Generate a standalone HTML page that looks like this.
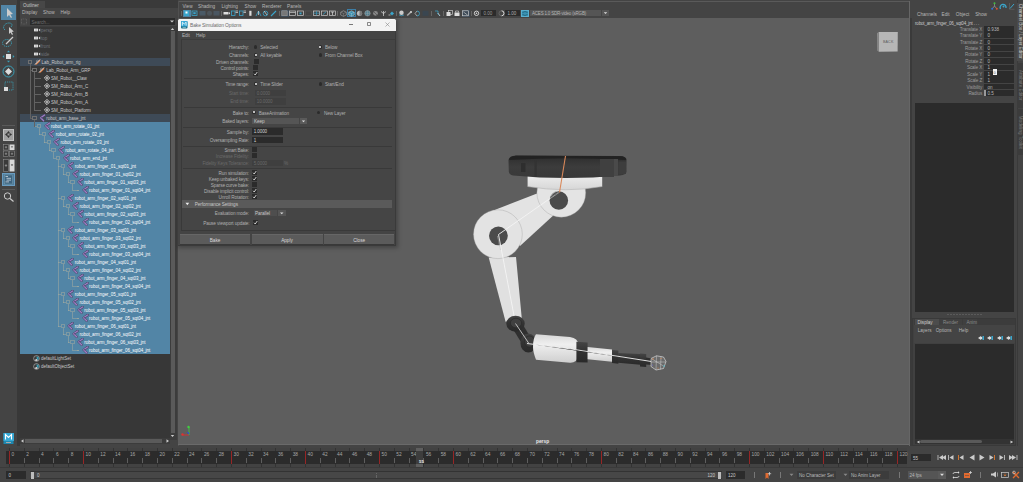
<!DOCTYPE html><html><head><meta charset="utf-8"><style>
html,body{margin:0;padding:0}
body{width:1023px;height:482px;overflow:hidden;position:relative;background:#444;font-family:"Liberation Sans",sans-serif}
div,span,svg{position:absolute;box-sizing:border-box}
.t{white-space:nowrap;line-height:1}
</style></head><body>
<div style="left:0px;top:0px;width:17px;height:446px;background:#444444;"></div>
<div style="left:17px;top:0px;width:2.5px;height:446px;background:#383838;"></div>
<div style="left:1px;top:5px;width:15px;height:15px;background:#5285a6;"></div>
<svg style="left:1px;top:5px;" width="15" height="15" viewBox="0 0 15 15"><path d="M6 3 L6 12 L8 10 L10 13 L11 12.3 L9.3 9.4 L12 9 Z" fill="#ccc"/></svg>
<svg style="left:1px;top:20px;" width="15" height="15" viewBox="0 0 15 15"><path d="M4 10 C1 8 3 3 8 3 C11 3 12 5 10 7" fill="none" stroke="#38a0b8" stroke-width="1" stroke-dasharray="1.2 0.8"/><path d="M8 7 L8 14 L9.5 12.5 L11 15 L12 14.3 L10.7 12 L12.8 11.6Z" fill="#ccc"/></svg>
<svg style="left:1px;top:34px;" width="15" height="15" viewBox="0 0 15 15"><ellipse cx="6" cy="9" rx="4.5" ry="3.5" fill="none" stroke="#38a0b8" stroke-width="1" stroke-dasharray="1.2 0.8"/><path d="M5 10 L12 3" stroke="#ccc" stroke-width="1.3"/></svg>
<svg style="left:1px;top:49px;" width="15" height="15" viewBox="0 0 15 15"><rect x="5" y="5" width="5" height="5" fill="#ddd"/><path d="M7.5 1.5 L6 3.2 H9Z M7.5 13.5 L6 11.8 H9Z M1.5 7.5 L3.2 6 V9Z M13.5 7.5 L11.8 6 V9Z" fill="#38a0b8"/></svg>
<svg style="left:1px;top:64px;" width="15" height="15" viewBox="0 0 15 15"><circle cx="7.5" cy="7.5" r="5.5" fill="none" stroke="#38a0b8" stroke-width="1"/><path d="M7.5 4 L11 7.5 L7.5 11 L4 7.5Z" fill="#ddd"/></svg>
<svg style="left:1px;top:79px;" width="15" height="15" viewBox="0 0 15 15"><rect x="4" y="3" width="8" height="8" fill="none" stroke="#38a0b8" stroke-width="0.9" stroke-dasharray="1 0.9"/><rect x="3" y="8" width="4" height="4" fill="#ddd"/></svg>
<div style="left:2px;top:124.5px;width:13px;height:1px;background:#5a5a5a;"></div>
<div style="left:2.5px;top:128.8px;width:11.5px;height:12px;background:#a0a0a0;border:0.6px solid #c0c0c0"></div>
<svg style="left:2.7px;top:129.3px;" width="11" height="11" viewBox="0 0 11 11"><path d="M5.5 2 L7.5 4.5 H3.5Z M5.5 9 L3.5 6.5 H7.5Z M2 5.5 L4.5 3.5 V7.5Z M9 5.5 L6.5 3.5 V7.5Z" fill="#333"/></svg>
<svg style="left:2.5px;top:144px;" width="12" height="13" viewBox="0 0 12 13"><rect x="0.5" y="0.5" width="5" height="5.5" fill="#3a3a3a" stroke="#999" stroke-width="0.5"/><rect x="6.5" y="0.5" width="5" height="5.5" fill="#d8d8d8"/><path d="M7.8 2.5 H10.2 L9 3.8Z" fill="#333"/><rect x="0.5" y="7" width="5" height="5.5" fill="#3a3a3a" stroke="#999" stroke-width="0.5"/><rect x="6.5" y="7" width="5" height="5.5" fill="#3a3a3a" stroke="#999" stroke-width="0.5"/><path d="M3 2 V4.5 M1.8 3.2 H4.2 M3 8.5 V11 M1.8 9.8 H4.2 M9 8.5 V11 M7.8 9.8 H10.2" stroke="#bbb" stroke-width="0.5"/></svg>
<svg style="left:2.5px;top:158.5px;" width="12" height="13" viewBox="0 0 12 13"><rect x="0.5" y="0.5" width="5" height="12" fill="#3a3a3a" stroke="#999" stroke-width="0.5"/><rect x="6.5" y="0.5" width="5" height="12" fill="#d8d8d8"/><path d="M7.8 5.5 H10.2 L9 7Z" fill="#333"/><path d="M3 5 V8 M1.8 6.5 H4.2" stroke="#bbb" stroke-width="0.5"/></svg>
<div style="left:2px;top:172.5px;width:13px;height:13px;background:#4f7d9c;border:0.6px solid #6a9cc0"></div>
<svg style="left:2px;top:172.5px;" width="13" height="13" viewBox="0 0 13 13"><rect x="2.5" y="2" width="8" height="9" fill="#3d6480" stroke="#8ab" stroke-width="0.4"/><path d="M3.5 3.5 H6 M4.5 5.3 H9 M4.5 7.1 H9 M3.5 8.9 H7" stroke="#e0e8ee" stroke-width="0.7"/></svg>
<div style="left:2px;top:188.5px;width:13px;height:1px;background:#5a5a5a;"></div>
<svg style="left:2px;top:191px;" width="13" height="11" viewBox="0 0 13 11"><circle cx="5.5" cy="5" r="3.2" fill="none" stroke="#ccc" stroke-width="1"/><path d="M8 7.5 L11.5 10.5" stroke="#ccc" stroke-width="1.2"/></svg>
<svg style="left:2px;top:432px;" width="13" height="13" viewBox="0 0 13 13"><path d="M1.5 1 H11.5 V12 H1.5Z" fill="#1e88b0"/><path d="M1.5 1 H12 V9 H1.5Z" fill="#37a8d4"/><path d="M3.5 7.5 V2.5 L6.5 5.5 L9.5 2.5 V7.5" fill="none" stroke="#fff" stroke-width="1.1"/><rect x="4" y="10" width="5" height="1" fill="#aaa"/></svg>
<div style="left:19.5px;top:0px;width:158.5px;height:446px;background:#444444;"></div>
<div style="left:19.5px;top:0px;width:158px;height:1px;background:#3a3a3a;"></div>
<div style="left:19.5px;top:1px;width:25px;height:6.8px;background:#474747;"></div>
<span class="t" style="left:23px;top:4.07px;font-size:4.5px;color:#c8c8c8;">Outliner</span>
<div style="left:44.5px;top:0px;width:133px;height:7.8px;background:#3a3a3a;"></div>
<span class="t" style="left:22px;top:11.07px;font-size:4.7px;color:#b8b8b8;">Display</span>
<span class="t" style="left:43px;top:11.07px;font-size:4.7px;color:#b8b8b8;">Show</span>
<span class="t" style="left:60.5px;top:11.07px;font-size:4.7px;color:#b8b8b8;">Help</span>
<svg style="left:20px;top:18px;" width="8" height="7" viewBox="0 0 8 7"><rect x="1.5" y="1" width="5" height="5" fill="none" stroke="#777" stroke-width="0.5" stroke-dasharray="1 0.6"/></svg>
<div style="left:30px;top:18px;width:144.5px;height:7px;background:#2b2b2b;"></div>
<span class="t" style="left:31.5px;top:20.87px;font-size:4.5px;color:#707070;">Search...</span>
<svg style="left:168.5px;top:19px;" width="6" height="5" viewBox="0 0 6 5"><path d="M1 1.5 H5 L3 3.5Z" fill="#ccc"/></svg>
<div style="left:19.5px;top:25.5px;width:150.7px;height:414px;background:#373737;"></div>
<div style="left:19.5px;top:25.5px;width:152px;height:0.8px;background:#3e3e3e;"></div>
<div style="left:170.2px;top:25.5px;width:6.8px;height:414px;background:#3c3c3c;"></div>
<svg style="left:170.3px;top:27px;" width="5" height="4" viewBox="0 0 5 4"><path d="M0.8 3 L2.5 1 L4.2 3Z" fill="#ccc"/></svg>
<div style="left:170.6px;top:31px;width:4.4px;height:401.5px;background:#5a5a5a;"></div>
<svg style="left:170.3px;top:434px;" width="5" height="4" viewBox="0 0 5 4"><path d="M0.8 1 L2.5 3 L4.2 1Z" fill="#ccc"/></svg>
<div style="left:19.5px;top:438px;width:150.7px;height:6px;background:#3c3c3c;"></div>
<svg style="left:20px;top:438px;" width="5" height="6" viewBox="0 0 5 6"><path d="M1 3 L3.5 1.3 V4.7Z" fill="#ccc"/></svg>
<div style="left:25px;top:439px;width:136.5px;height:4px;background:#5a5a5a;"></div>
<svg style="left:165px;top:438px;" width="5" height="6" viewBox="0 0 5 6"><path d="M4 3 L1.5 1.3 V4.7Z" fill="#ccc"/></svg>
<div style="left:19.5px;top:122.2px;width:150.7px;height:232px;background:#5285a6;"></div>
<div style="left:19.5px;top:58.2px;width:150.7px;height:8px;background:#3e4a57;"></div>
<div style="left:19.5px;top:114.2px;width:150.7px;height:8px;background:#3e4a57;"></div>
<div style="left:29.55px;top:64.0px;width:0.5px;height:54.5px;background:#626262;"></div>
<div style="left:29.8px;top:69.95px;width:2.5500000000000007px;height:0.5px;background:#626262;"></div>
<div style="left:29.8px;top:117.95px;width:2.5500000000000007px;height:0.5px;background:#626262;"></div>
<div style="left:34.300000000000004px;top:72.0px;width:0.5px;height:38.5px;background:#626262;"></div>
<div style="left:34.550000000000004px;top:77.95px;width:6.049999999999997px;height:0.5px;background:#626262;"></div>
<div style="left:39.4px;top:77.5px;width:1.4px;height:1.4px;background:#626262;"></div>
<div style="left:34.550000000000004px;top:85.95px;width:6.049999999999997px;height:0.5px;background:#626262;"></div>
<div style="left:39.4px;top:85.5px;width:1.4px;height:1.4px;background:#626262;"></div>
<div style="left:34.550000000000004px;top:93.95px;width:6.049999999999997px;height:0.5px;background:#626262;"></div>
<div style="left:39.4px;top:93.5px;width:1.4px;height:1.4px;background:#626262;"></div>
<div style="left:34.550000000000004px;top:101.95px;width:6.049999999999997px;height:0.5px;background:#626262;"></div>
<div style="left:39.4px;top:101.5px;width:1.4px;height:1.4px;background:#626262;"></div>
<div style="left:34.550000000000004px;top:109.95px;width:6.049999999999997px;height:0.5px;background:#626262;"></div>
<div style="left:39.4px;top:109.5px;width:1.4px;height:1.4px;background:#626262;"></div>
<div style="left:34.300000000000004px;top:120.0px;width:0.5px;height:6.500000000000003px;background:#626262;"></div>
<div style="left:34.550000000000004px;top:125.95px;width:2.549999999999997px;height:0.5px;background:rgba(185,180,160,0.42);"></div>
<div style="left:39.050000000000004px;top:128.0px;width:0.5px;height:6.4999999999999885px;background:rgba(185,180,160,0.42);"></div>
<div style="left:39.300000000000004px;top:133.95px;width:2.549999999999997px;height:0.5px;background:rgba(185,180,160,0.42);"></div>
<div style="left:43.800000000000004px;top:136.0px;width:0.5px;height:6.4999999999999885px;background:rgba(185,180,160,0.42);"></div>
<div style="left:44.050000000000004px;top:141.95px;width:2.549999999999997px;height:0.5px;background:rgba(185,180,160,0.42);"></div>
<div style="left:48.550000000000004px;top:144.0px;width:0.5px;height:6.4999999999999885px;background:rgba(185,180,160,0.42);"></div>
<div style="left:48.800000000000004px;top:149.95px;width:2.549999999999997px;height:0.5px;background:rgba(185,180,160,0.42);"></div>
<div style="left:53.300000000000004px;top:152.0px;width:0.5px;height:6.4999999999999885px;background:rgba(185,180,160,0.42);"></div>
<div style="left:53.550000000000004px;top:157.95px;width:2.549999999999997px;height:0.5px;background:rgba(185,180,160,0.42);"></div>
<div style="left:58.050000000000004px;top:160.0px;width:0.5px;height:166.5px;background:rgba(185,180,160,0.42);"></div>
<div style="left:58.300000000000004px;top:165.95px;width:2.549999999999997px;height:0.5px;background:rgba(185,180,160,0.42);"></div>
<div style="left:58.300000000000004px;top:197.95px;width:2.549999999999997px;height:0.5px;background:rgba(185,180,160,0.42);"></div>
<div style="left:58.300000000000004px;top:229.95px;width:2.549999999999997px;height:0.5px;background:rgba(185,180,160,0.42);"></div>
<div style="left:58.300000000000004px;top:261.95px;width:2.549999999999997px;height:0.5px;background:rgba(185,180,160,0.42);"></div>
<div style="left:58.300000000000004px;top:293.95px;width:2.549999999999997px;height:0.5px;background:rgba(185,180,160,0.42);"></div>
<div style="left:58.300000000000004px;top:325.95px;width:2.549999999999997px;height:0.5px;background:rgba(185,180,160,0.42);"></div>
<div style="left:62.800000000000004px;top:168.0px;width:0.5px;height:6.4999999999999885px;background:rgba(185,180,160,0.42);"></div>
<div style="left:63.050000000000004px;top:173.95px;width:2.54999999999999px;height:0.5px;background:rgba(185,180,160,0.42);"></div>
<div style="left:67.55px;top:176.0px;width:0.5px;height:6.4999999999999885px;background:rgba(185,180,160,0.42);"></div>
<div style="left:67.8px;top:181.95px;width:2.549999999999997px;height:0.5px;background:rgba(185,180,160,0.42);"></div>
<div style="left:72.3px;top:184.0px;width:0.5px;height:6.4999999999999885px;background:rgba(185,180,160,0.42);"></div>
<div style="left:72.55px;top:189.95px;width:6.049999999999997px;height:0.5px;background:rgba(185,180,160,0.42);"></div>
<div style="left:77.39999999999999px;top:189.5px;width:1.4px;height:1.4px;background:rgba(185,180,160,0.42);"></div>
<div style="left:62.800000000000004px;top:200.0px;width:0.5px;height:6.4999999999999885px;background:rgba(185,180,160,0.42);"></div>
<div style="left:63.050000000000004px;top:205.95px;width:2.54999999999999px;height:0.5px;background:rgba(185,180,160,0.42);"></div>
<div style="left:67.55px;top:208.0px;width:0.5px;height:6.4999999999999885px;background:rgba(185,180,160,0.42);"></div>
<div style="left:67.8px;top:213.95px;width:2.549999999999997px;height:0.5px;background:rgba(185,180,160,0.42);"></div>
<div style="left:72.3px;top:216.0px;width:0.5px;height:6.4999999999999885px;background:rgba(185,180,160,0.42);"></div>
<div style="left:72.55px;top:221.95px;width:6.049999999999997px;height:0.5px;background:rgba(185,180,160,0.42);"></div>
<div style="left:77.39999999999999px;top:221.5px;width:1.4px;height:1.4px;background:rgba(185,180,160,0.42);"></div>
<div style="left:62.800000000000004px;top:232.0px;width:0.5px;height:6.4999999999999885px;background:rgba(185,180,160,0.42);"></div>
<div style="left:63.050000000000004px;top:237.95px;width:2.54999999999999px;height:0.5px;background:rgba(185,180,160,0.42);"></div>
<div style="left:67.55px;top:240.0px;width:0.5px;height:6.4999999999999885px;background:rgba(185,180,160,0.42);"></div>
<div style="left:67.8px;top:245.95px;width:2.549999999999997px;height:0.5px;background:rgba(185,180,160,0.42);"></div>
<div style="left:72.3px;top:248.0px;width:0.5px;height:6.4999999999999885px;background:rgba(185,180,160,0.42);"></div>
<div style="left:72.55px;top:253.95px;width:6.049999999999997px;height:0.5px;background:rgba(185,180,160,0.42);"></div>
<div style="left:77.39999999999999px;top:253.5px;width:1.4px;height:1.4px;background:rgba(185,180,160,0.42);"></div>
<div style="left:62.800000000000004px;top:264.0px;width:0.5px;height:6.4999999999999885px;background:rgba(185,180,160,0.42);"></div>
<div style="left:63.050000000000004px;top:269.95px;width:2.54999999999999px;height:0.5px;background:rgba(185,180,160,0.42);"></div>
<div style="left:67.55px;top:272.0px;width:0.5px;height:6.4999999999999885px;background:rgba(185,180,160,0.42);"></div>
<div style="left:67.8px;top:277.95px;width:2.549999999999997px;height:0.5px;background:rgba(185,180,160,0.42);"></div>
<div style="left:72.3px;top:280.0px;width:0.5px;height:6.4999999999999885px;background:rgba(185,180,160,0.42);"></div>
<div style="left:72.55px;top:285.95px;width:6.049999999999997px;height:0.5px;background:rgba(185,180,160,0.42);"></div>
<div style="left:77.39999999999999px;top:285.5px;width:1.4px;height:1.4px;background:rgba(185,180,160,0.42);"></div>
<div style="left:62.800000000000004px;top:296.0px;width:0.5px;height:6.4999999999999885px;background:rgba(185,180,160,0.42);"></div>
<div style="left:63.050000000000004px;top:301.95px;width:2.54999999999999px;height:0.5px;background:rgba(185,180,160,0.42);"></div>
<div style="left:67.55px;top:304.0px;width:0.5px;height:6.4999999999999885px;background:rgba(185,180,160,0.42);"></div>
<div style="left:67.8px;top:309.95px;width:2.549999999999997px;height:0.5px;background:rgba(185,180,160,0.42);"></div>
<div style="left:72.3px;top:312.0px;width:0.5px;height:6.4999999999999885px;background:rgba(185,180,160,0.42);"></div>
<div style="left:72.55px;top:317.95px;width:6.049999999999997px;height:0.5px;background:rgba(185,180,160,0.42);"></div>
<div style="left:77.39999999999999px;top:317.5px;width:1.4px;height:1.4px;background:rgba(185,180,160,0.42);"></div>
<div style="left:62.800000000000004px;top:328.0px;width:0.5px;height:6.4999999999999885px;background:rgba(185,180,160,0.42);"></div>
<div style="left:63.050000000000004px;top:333.95px;width:2.54999999999999px;height:0.5px;background:rgba(185,180,160,0.42);"></div>
<div style="left:67.55px;top:336.0px;width:0.5px;height:6.4999999999999885px;background:rgba(185,180,160,0.42);"></div>
<div style="left:67.8px;top:341.95px;width:2.549999999999997px;height:0.5px;background:rgba(185,180,160,0.42);"></div>
<div style="left:72.3px;top:344.0px;width:0.5px;height:6.4999999999999885px;background:rgba(185,180,160,0.42);"></div>
<div style="left:72.55px;top:349.95px;width:6.049999999999997px;height:0.5px;background:rgba(185,180,160,0.42);"></div>
<div style="left:77.39999999999999px;top:349.5px;width:1.4px;height:1.4px;background:rgba(185,180,160,0.42);"></div>
<svg style="left:34px;top:28.2px;" width="7" height="4" viewBox="0 0 7 4"><rect x="0" y="0.6" width="4" height="2.8" fill="#e0e0e0"/><path d="M4.5 2 L6.2 0.6 V3.4Z" fill="#e0e0e0"/><rect x="1.8" y="0.6" width="0.5" height="2.8" fill="#888"/></svg>
<span class="t" style="left:41px;top:29.27px;font-size:4.5px;color:#6e7278;">persp</span>
<svg style="left:34px;top:36.2px;" width="7" height="4" viewBox="0 0 7 4"><rect x="0" y="0.6" width="4" height="2.8" fill="#e0e0e0"/><path d="M4.5 2 L6.2 0.6 V3.4Z" fill="#e0e0e0"/><rect x="1.8" y="0.6" width="0.5" height="2.8" fill="#888"/></svg>
<span class="t" style="left:41px;top:37.27px;font-size:4.5px;color:#6e7278;">top</span>
<svg style="left:34px;top:44.2px;" width="7" height="4" viewBox="0 0 7 4"><rect x="0" y="0.6" width="4" height="2.8" fill="#e0e0e0"/><path d="M4.5 2 L6.2 0.6 V3.4Z" fill="#e0e0e0"/><rect x="1.8" y="0.6" width="0.5" height="2.8" fill="#888"/></svg>
<span class="t" style="left:41px;top:45.27px;font-size:4.5px;color:#6e7278;">front</span>
<svg style="left:34px;top:52.2px;" width="7" height="4" viewBox="0 0 7 4"><rect x="0" y="0.6" width="4" height="2.8" fill="#e0e0e0"/><path d="M4.5 2 L6.2 0.6 V3.4Z" fill="#e0e0e0"/><rect x="1.8" y="0.6" width="0.5" height="2.8" fill="#888"/></svg>
<span class="t" style="left:41px;top:53.27px;font-size:4.5px;color:#6e7278;">side</span>
<svg style="left:33.7px;top:59.2px;" width="7" height="6" viewBox="0 0 7 6"><path d="M1 5.5 L5.8 0.8 L6.5 2 L2.5 5.8Z" fill="#d9743a"/><path d="M1 5.5 L6 0.5" stroke="#f0f0f0" stroke-width="0.9"/><path d="M2 2.5 L3.5 1.2" stroke="#ddd" stroke-width="0.6"/></svg>
<span class="t" style="left:41.6px;top:61.27px;font-size:4.5px;color:#c8c8c8;letter-spacing:-0.05px">Lab_Robot_arm_rig</span>
<div style="left:27.6px;top:60.400000000000006px;width:4.4px;height:3.6px;border:0.6px solid #707070"></div>
<svg style="left:38.45px;top:67.2px;" width="7" height="6" viewBox="0 0 7 6"><path d="M1 5.5 L5.8 0.8 L6.5 2 L2.5 5.8Z" fill="#d9743a"/><path d="M1 5.5 L6 0.5" stroke="#f0f0f0" stroke-width="0.9"/><path d="M2 2.5 L3.5 1.2" stroke="#ddd" stroke-width="0.6"/></svg>
<span class="t" style="left:46.35px;top:69.27px;font-size:4.5px;color:#c8c8c8;letter-spacing:-0.05px">Lab_Robot_Arm_GRP</span>
<div style="left:32.35px;top:68.4px;width:4.4px;height:3.6px;border:0.6px solid #707070"></div>
<svg style="left:43.7px;top:75.2px;" width="6" height="6" viewBox="0 0 6 6"><path d="M3 0.4 L5.6 3 L3 5.6 L0.4 3Z" fill="none" stroke="#e0e0e0" stroke-width="0.9"/><circle cx="3" cy="3" r="0.9" fill="#e0e0e0"/></svg>
<span class="t" style="left:51.1px;top:77.27px;font-size:4.5px;color:#c8c8c8;letter-spacing:-0.05px">SM_Robot__Claw</span>
<svg style="left:43.7px;top:83.2px;" width="6" height="6" viewBox="0 0 6 6"><path d="M3 0.4 L5.6 3 L3 5.6 L0.4 3Z" fill="none" stroke="#e0e0e0" stroke-width="0.9"/><circle cx="3" cy="3" r="0.9" fill="#e0e0e0"/></svg>
<span class="t" style="left:51.1px;top:85.27px;font-size:4.5px;color:#c8c8c8;letter-spacing:-0.05px">SM_Robot_Arm_C</span>
<svg style="left:43.7px;top:91.2px;" width="6" height="6" viewBox="0 0 6 6"><path d="M3 0.4 L5.6 3 L3 5.6 L0.4 3Z" fill="none" stroke="#e0e0e0" stroke-width="0.9"/><circle cx="3" cy="3" r="0.9" fill="#e0e0e0"/></svg>
<span class="t" style="left:51.1px;top:93.27px;font-size:4.5px;color:#c8c8c8;letter-spacing:-0.05px">SM_Robot_Arm_B</span>
<svg style="left:43.7px;top:99.2px;" width="6" height="6" viewBox="0 0 6 6"><path d="M3 0.4 L5.6 3 L3 5.6 L0.4 3Z" fill="none" stroke="#e0e0e0" stroke-width="0.9"/><circle cx="3" cy="3" r="0.9" fill="#e0e0e0"/></svg>
<span class="t" style="left:51.1px;top:101.27px;font-size:4.5px;color:#c8c8c8;letter-spacing:-0.05px">SM_Robot_Arm_A</span>
<svg style="left:43.7px;top:107.2px;" width="6" height="6" viewBox="0 0 6 6"><path d="M3 0.4 L5.6 3 L3 5.6 L0.4 3Z" fill="none" stroke="#e0e0e0" stroke-width="0.9"/><circle cx="3" cy="3" r="0.9" fill="#e0e0e0"/></svg>
<span class="t" style="left:51.1px;top:109.27px;font-size:4.5px;color:#c8c8c8;letter-spacing:-0.05px">SM_Robot_Platform</span>
<svg style="left:38.75px;top:114.4px;" width="7" height="7.6" viewBox="0 0 7 7.6"><path d="M5.6 1 L1.6 3.8 L4.6 6.8" fill="none" stroke="#4a3f5e" stroke-width="2.2" stroke-linecap="round" stroke-linejoin="round"/><path d="M5.6 1 L1.6 3.8 L4.6 6.8" fill="none" stroke="#9d80c8" stroke-width="1.3" stroke-linecap="round" stroke-linejoin="round"/><circle cx="2.3" cy="3.8" r="0.55" fill="#3a3050"/></svg>
<span class="t" style="left:46.35px;top:117.27px;font-size:4.5px;color:#c8c8c8;letter-spacing:-0.05px">robot_arm_base_jnt</span>
<div style="left:32.35px;top:116.4px;width:4.4px;height:3.6px;border:0.6px solid #707070"></div>
<svg style="left:43.5px;top:122.4px;" width="7" height="7.6" viewBox="0 0 7 7.6"><path d="M5.6 1 L1.6 3.8 L4.6 6.8" fill="none" stroke="#4a3f5e" stroke-width="2.2" stroke-linecap="round" stroke-linejoin="round"/><path d="M5.6 1 L1.6 3.8 L4.6 6.8" fill="none" stroke="#9d80c8" stroke-width="1.3" stroke-linecap="round" stroke-linejoin="round"/><circle cx="2.3" cy="3.8" r="0.55" fill="#3a3050"/></svg>
<span class="t" style="left:51.1px;top:125.27px;font-size:4.5px;color:#ffffff;letter-spacing:-0.05px">robot_arm_rotate_01_jnt</span>
<div style="left:37.1px;top:124.4px;width:4.4px;height:3.6px;border:0.6px solid rgba(185,180,160,0.42)"></div>
<svg style="left:48.25px;top:130.39999999999998px;" width="7" height="7.6" viewBox="0 0 7 7.6"><path d="M5.6 1 L1.6 3.8 L4.6 6.8" fill="none" stroke="#4a3f5e" stroke-width="2.2" stroke-linecap="round" stroke-linejoin="round"/><path d="M5.6 1 L1.6 3.8 L4.6 6.8" fill="none" stroke="#9d80c8" stroke-width="1.3" stroke-linecap="round" stroke-linejoin="round"/><circle cx="2.3" cy="3.8" r="0.55" fill="#3a3050"/></svg>
<span class="t" style="left:55.85px;top:133.27px;font-size:4.5px;color:#ffffff;letter-spacing:-0.05px">robot_arm_rotate_02_jnt</span>
<div style="left:41.85px;top:132.39999999999998px;width:4.4px;height:3.6px;border:0.6px solid rgba(185,180,160,0.42)"></div>
<svg style="left:53.0px;top:138.39999999999998px;" width="7" height="7.6" viewBox="0 0 7 7.6"><path d="M5.6 1 L1.6 3.8 L4.6 6.8" fill="none" stroke="#4a3f5e" stroke-width="2.2" stroke-linecap="round" stroke-linejoin="round"/><path d="M5.6 1 L1.6 3.8 L4.6 6.8" fill="none" stroke="#9d80c8" stroke-width="1.3" stroke-linecap="round" stroke-linejoin="round"/><circle cx="2.3" cy="3.8" r="0.55" fill="#3a3050"/></svg>
<span class="t" style="left:60.6px;top:141.27px;font-size:4.5px;color:#ffffff;letter-spacing:-0.05px">robot_arm_rotate_03_jnt</span>
<div style="left:46.6px;top:140.39999999999998px;width:4.4px;height:3.6px;border:0.6px solid rgba(185,180,160,0.42)"></div>
<svg style="left:57.75px;top:146.39999999999998px;" width="7" height="7.6" viewBox="0 0 7 7.6"><path d="M5.6 1 L1.6 3.8 L4.6 6.8" fill="none" stroke="#4a3f5e" stroke-width="2.2" stroke-linecap="round" stroke-linejoin="round"/><path d="M5.6 1 L1.6 3.8 L4.6 6.8" fill="none" stroke="#9d80c8" stroke-width="1.3" stroke-linecap="round" stroke-linejoin="round"/><circle cx="2.3" cy="3.8" r="0.55" fill="#3a3050"/></svg>
<span class="t" style="left:65.35000000000001px;top:149.27px;font-size:4.5px;color:#ffffff;letter-spacing:-0.05px">robot_arm_rotate_04_jnt</span>
<div style="left:51.35px;top:148.39999999999998px;width:4.4px;height:3.6px;border:0.6px solid rgba(185,180,160,0.42)"></div>
<svg style="left:62.5px;top:154.39999999999998px;" width="7" height="7.6" viewBox="0 0 7 7.6"><path d="M5.6 1 L1.6 3.8 L4.6 6.8" fill="none" stroke="#4a3f5e" stroke-width="2.2" stroke-linecap="round" stroke-linejoin="round"/><path d="M5.6 1 L1.6 3.8 L4.6 6.8" fill="none" stroke="#9d80c8" stroke-width="1.3" stroke-linecap="round" stroke-linejoin="round"/><circle cx="2.3" cy="3.8" r="0.55" fill="#3a3050"/></svg>
<span class="t" style="left:70.10000000000001px;top:157.27px;font-size:4.5px;color:#ffffff;letter-spacing:-0.05px">robot_arm_end_jnt</span>
<div style="left:56.1px;top:156.39999999999998px;width:4.4px;height:3.6px;border:0.6px solid rgba(185,180,160,0.42)"></div>
<svg style="left:67.25px;top:162.39999999999998px;" width="7" height="7.6" viewBox="0 0 7 7.6"><path d="M5.6 1 L1.6 3.8 L4.6 6.8" fill="none" stroke="#4a3f5e" stroke-width="2.2" stroke-linecap="round" stroke-linejoin="round"/><path d="M5.6 1 L1.6 3.8 L4.6 6.8" fill="none" stroke="#9d80c8" stroke-width="1.3" stroke-linecap="round" stroke-linejoin="round"/><circle cx="2.3" cy="3.8" r="0.55" fill="#3a3050"/></svg>
<span class="t" style="left:74.85000000000001px;top:165.27px;font-size:4.5px;color:#ffffff;letter-spacing:-0.05px">robot_arm_finger_01_sqt01_jnt</span>
<div style="left:60.85px;top:164.39999999999998px;width:4.4px;height:3.6px;border:0.6px solid rgba(185,180,160,0.42)"></div>
<svg style="left:72.0px;top:170.39999999999998px;" width="7" height="7.6" viewBox="0 0 7 7.6"><path d="M5.6 1 L1.6 3.8 L4.6 6.8" fill="none" stroke="#4a3f5e" stroke-width="2.2" stroke-linecap="round" stroke-linejoin="round"/><path d="M5.6 1 L1.6 3.8 L4.6 6.8" fill="none" stroke="#9d80c8" stroke-width="1.3" stroke-linecap="round" stroke-linejoin="round"/><circle cx="2.3" cy="3.8" r="0.55" fill="#3a3050"/></svg>
<span class="t" style="left:79.60000000000001px;top:173.27px;font-size:4.5px;color:#ffffff;letter-spacing:-0.05px">robot_arm_finger_01_sqt02_jnt</span>
<div style="left:65.6px;top:172.39999999999998px;width:4.4px;height:3.6px;border:0.6px solid rgba(185,180,160,0.42)"></div>
<svg style="left:76.75px;top:178.39999999999998px;" width="7" height="7.6" viewBox="0 0 7 7.6"><path d="M5.6 1 L1.6 3.8 L4.6 6.8" fill="none" stroke="#4a3f5e" stroke-width="2.2" stroke-linecap="round" stroke-linejoin="round"/><path d="M5.6 1 L1.6 3.8 L4.6 6.8" fill="none" stroke="#9d80c8" stroke-width="1.3" stroke-linecap="round" stroke-linejoin="round"/><circle cx="2.3" cy="3.8" r="0.55" fill="#3a3050"/></svg>
<span class="t" style="left:84.35000000000001px;top:181.27px;font-size:4.5px;color:#ffffff;letter-spacing:-0.05px">robot_arm_finger_01_sqt03_jnt</span>
<div style="left:70.35px;top:180.39999999999998px;width:4.4px;height:3.6px;border:0.6px solid rgba(185,180,160,0.42)"></div>
<svg style="left:81.5px;top:186.39999999999998px;" width="7" height="7.6" viewBox="0 0 7 7.6"><path d="M5.6 1 L1.6 3.8 L4.6 6.8" fill="none" stroke="#4a3f5e" stroke-width="2.2" stroke-linecap="round" stroke-linejoin="round"/><path d="M5.6 1 L1.6 3.8 L4.6 6.8" fill="none" stroke="#9d80c8" stroke-width="1.3" stroke-linecap="round" stroke-linejoin="round"/><circle cx="2.3" cy="3.8" r="0.55" fill="#3a3050"/></svg>
<span class="t" style="left:89.10000000000001px;top:189.27px;font-size:4.5px;color:#ffffff;letter-spacing:-0.05px">robot_arm_finger_01_sqt04_jnt</span>
<svg style="left:67.25px;top:194.39999999999998px;" width="7" height="7.6" viewBox="0 0 7 7.6"><path d="M5.6 1 L1.6 3.8 L4.6 6.8" fill="none" stroke="#4a3f5e" stroke-width="2.2" stroke-linecap="round" stroke-linejoin="round"/><path d="M5.6 1 L1.6 3.8 L4.6 6.8" fill="none" stroke="#9d80c8" stroke-width="1.3" stroke-linecap="round" stroke-linejoin="round"/><circle cx="2.3" cy="3.8" r="0.55" fill="#3a3050"/></svg>
<span class="t" style="left:74.85000000000001px;top:197.27px;font-size:4.5px;color:#ffffff;letter-spacing:-0.05px">robot_arm_finger_02_sqt01_jnt</span>
<div style="left:60.85px;top:196.39999999999998px;width:4.4px;height:3.6px;border:0.6px solid rgba(185,180,160,0.42)"></div>
<svg style="left:72.0px;top:202.39999999999998px;" width="7" height="7.6" viewBox="0 0 7 7.6"><path d="M5.6 1 L1.6 3.8 L4.6 6.8" fill="none" stroke="#4a3f5e" stroke-width="2.2" stroke-linecap="round" stroke-linejoin="round"/><path d="M5.6 1 L1.6 3.8 L4.6 6.8" fill="none" stroke="#9d80c8" stroke-width="1.3" stroke-linecap="round" stroke-linejoin="round"/><circle cx="2.3" cy="3.8" r="0.55" fill="#3a3050"/></svg>
<span class="t" style="left:79.60000000000001px;top:205.27px;font-size:4.5px;color:#ffffff;letter-spacing:-0.05px">robot_arm_finger_02_sqt02_jnt</span>
<div style="left:65.6px;top:204.39999999999998px;width:4.4px;height:3.6px;border:0.6px solid rgba(185,180,160,0.42)"></div>
<svg style="left:76.75px;top:210.39999999999998px;" width="7" height="7.6" viewBox="0 0 7 7.6"><path d="M5.6 1 L1.6 3.8 L4.6 6.8" fill="none" stroke="#4a3f5e" stroke-width="2.2" stroke-linecap="round" stroke-linejoin="round"/><path d="M5.6 1 L1.6 3.8 L4.6 6.8" fill="none" stroke="#9d80c8" stroke-width="1.3" stroke-linecap="round" stroke-linejoin="round"/><circle cx="2.3" cy="3.8" r="0.55" fill="#3a3050"/></svg>
<span class="t" style="left:84.35000000000001px;top:213.27px;font-size:4.5px;color:#ffffff;letter-spacing:-0.05px">robot_arm_finger_02_sqt03_jnt</span>
<div style="left:70.35px;top:212.39999999999998px;width:4.4px;height:3.6px;border:0.6px solid rgba(185,180,160,0.42)"></div>
<svg style="left:81.5px;top:218.39999999999998px;" width="7" height="7.6" viewBox="0 0 7 7.6"><path d="M5.6 1 L1.6 3.8 L4.6 6.8" fill="none" stroke="#4a3f5e" stroke-width="2.2" stroke-linecap="round" stroke-linejoin="round"/><path d="M5.6 1 L1.6 3.8 L4.6 6.8" fill="none" stroke="#9d80c8" stroke-width="1.3" stroke-linecap="round" stroke-linejoin="round"/><circle cx="2.3" cy="3.8" r="0.55" fill="#3a3050"/></svg>
<span class="t" style="left:89.10000000000001px;top:221.27px;font-size:4.5px;color:#ffffff;letter-spacing:-0.05px">robot_arm_finger_02_sqt04_jnt</span>
<svg style="left:67.25px;top:226.39999999999998px;" width="7" height="7.6" viewBox="0 0 7 7.6"><path d="M5.6 1 L1.6 3.8 L4.6 6.8" fill="none" stroke="#4a3f5e" stroke-width="2.2" stroke-linecap="round" stroke-linejoin="round"/><path d="M5.6 1 L1.6 3.8 L4.6 6.8" fill="none" stroke="#9d80c8" stroke-width="1.3" stroke-linecap="round" stroke-linejoin="round"/><circle cx="2.3" cy="3.8" r="0.55" fill="#3a3050"/></svg>
<span class="t" style="left:74.85000000000001px;top:229.27px;font-size:4.5px;color:#ffffff;letter-spacing:-0.05px">robot_arm_finger_03_sqt01_jnt</span>
<div style="left:60.85px;top:228.39999999999998px;width:4.4px;height:3.6px;border:0.6px solid rgba(185,180,160,0.42)"></div>
<svg style="left:72.0px;top:234.39999999999998px;" width="7" height="7.6" viewBox="0 0 7 7.6"><path d="M5.6 1 L1.6 3.8 L4.6 6.8" fill="none" stroke="#4a3f5e" stroke-width="2.2" stroke-linecap="round" stroke-linejoin="round"/><path d="M5.6 1 L1.6 3.8 L4.6 6.8" fill="none" stroke="#9d80c8" stroke-width="1.3" stroke-linecap="round" stroke-linejoin="round"/><circle cx="2.3" cy="3.8" r="0.55" fill="#3a3050"/></svg>
<span class="t" style="left:79.60000000000001px;top:237.27px;font-size:4.5px;color:#ffffff;letter-spacing:-0.05px">robot_arm_finger_03_sqt02_jnt</span>
<div style="left:65.6px;top:236.39999999999998px;width:4.4px;height:3.6px;border:0.6px solid rgba(185,180,160,0.42)"></div>
<svg style="left:76.75px;top:242.39999999999998px;" width="7" height="7.6" viewBox="0 0 7 7.6"><path d="M5.6 1 L1.6 3.8 L4.6 6.8" fill="none" stroke="#4a3f5e" stroke-width="2.2" stroke-linecap="round" stroke-linejoin="round"/><path d="M5.6 1 L1.6 3.8 L4.6 6.8" fill="none" stroke="#9d80c8" stroke-width="1.3" stroke-linecap="round" stroke-linejoin="round"/><circle cx="2.3" cy="3.8" r="0.55" fill="#3a3050"/></svg>
<span class="t" style="left:84.35000000000001px;top:245.27px;font-size:4.5px;color:#ffffff;letter-spacing:-0.05px">robot_arm_finger_03_sqt03_jnt</span>
<div style="left:70.35px;top:244.39999999999998px;width:4.4px;height:3.6px;border:0.6px solid rgba(185,180,160,0.42)"></div>
<svg style="left:81.5px;top:250.39999999999998px;" width="7" height="7.6" viewBox="0 0 7 7.6"><path d="M5.6 1 L1.6 3.8 L4.6 6.8" fill="none" stroke="#4a3f5e" stroke-width="2.2" stroke-linecap="round" stroke-linejoin="round"/><path d="M5.6 1 L1.6 3.8 L4.6 6.8" fill="none" stroke="#9d80c8" stroke-width="1.3" stroke-linecap="round" stroke-linejoin="round"/><circle cx="2.3" cy="3.8" r="0.55" fill="#3a3050"/></svg>
<span class="t" style="left:89.10000000000001px;top:253.27px;font-size:4.5px;color:#ffffff;letter-spacing:-0.05px">robot_arm_finger_03_sqt04_jnt</span>
<svg style="left:67.25px;top:258.4px;" width="7" height="7.6" viewBox="0 0 7 7.6"><path d="M5.6 1 L1.6 3.8 L4.6 6.8" fill="none" stroke="#4a3f5e" stroke-width="2.2" stroke-linecap="round" stroke-linejoin="round"/><path d="M5.6 1 L1.6 3.8 L4.6 6.8" fill="none" stroke="#9d80c8" stroke-width="1.3" stroke-linecap="round" stroke-linejoin="round"/><circle cx="2.3" cy="3.8" r="0.55" fill="#3a3050"/></svg>
<span class="t" style="left:74.85000000000001px;top:261.27px;font-size:4.5px;color:#ffffff;letter-spacing:-0.05px">robot_arm_finger_04_sqt01_jnt</span>
<div style="left:60.85px;top:260.4px;width:4.4px;height:3.6px;border:0.6px solid rgba(185,180,160,0.42)"></div>
<svg style="left:72.0px;top:266.4px;" width="7" height="7.6" viewBox="0 0 7 7.6"><path d="M5.6 1 L1.6 3.8 L4.6 6.8" fill="none" stroke="#4a3f5e" stroke-width="2.2" stroke-linecap="round" stroke-linejoin="round"/><path d="M5.6 1 L1.6 3.8 L4.6 6.8" fill="none" stroke="#9d80c8" stroke-width="1.3" stroke-linecap="round" stroke-linejoin="round"/><circle cx="2.3" cy="3.8" r="0.55" fill="#3a3050"/></svg>
<span class="t" style="left:79.60000000000001px;top:269.27px;font-size:4.5px;color:#ffffff;letter-spacing:-0.05px">robot_arm_finger_04_sqt02_jnt</span>
<div style="left:65.6px;top:268.4px;width:4.4px;height:3.6px;border:0.6px solid rgba(185,180,160,0.42)"></div>
<svg style="left:76.75px;top:274.4px;" width="7" height="7.6" viewBox="0 0 7 7.6"><path d="M5.6 1 L1.6 3.8 L4.6 6.8" fill="none" stroke="#4a3f5e" stroke-width="2.2" stroke-linecap="round" stroke-linejoin="round"/><path d="M5.6 1 L1.6 3.8 L4.6 6.8" fill="none" stroke="#9d80c8" stroke-width="1.3" stroke-linecap="round" stroke-linejoin="round"/><circle cx="2.3" cy="3.8" r="0.55" fill="#3a3050"/></svg>
<span class="t" style="left:84.35000000000001px;top:277.27px;font-size:4.5px;color:#ffffff;letter-spacing:-0.05px">robot_arm_finger_04_sqt03_jnt</span>
<div style="left:70.35px;top:276.4px;width:4.4px;height:3.6px;border:0.6px solid rgba(185,180,160,0.42)"></div>
<svg style="left:81.5px;top:282.4px;" width="7" height="7.6" viewBox="0 0 7 7.6"><path d="M5.6 1 L1.6 3.8 L4.6 6.8" fill="none" stroke="#4a3f5e" stroke-width="2.2" stroke-linecap="round" stroke-linejoin="round"/><path d="M5.6 1 L1.6 3.8 L4.6 6.8" fill="none" stroke="#9d80c8" stroke-width="1.3" stroke-linecap="round" stroke-linejoin="round"/><circle cx="2.3" cy="3.8" r="0.55" fill="#3a3050"/></svg>
<span class="t" style="left:89.10000000000001px;top:285.27px;font-size:4.5px;color:#ffffff;letter-spacing:-0.05px">robot_arm_finger_04_sqt04_jnt</span>
<svg style="left:67.25px;top:290.4px;" width="7" height="7.6" viewBox="0 0 7 7.6"><path d="M5.6 1 L1.6 3.8 L4.6 6.8" fill="none" stroke="#4a3f5e" stroke-width="2.2" stroke-linecap="round" stroke-linejoin="round"/><path d="M5.6 1 L1.6 3.8 L4.6 6.8" fill="none" stroke="#9d80c8" stroke-width="1.3" stroke-linecap="round" stroke-linejoin="round"/><circle cx="2.3" cy="3.8" r="0.55" fill="#3a3050"/></svg>
<span class="t" style="left:74.85000000000001px;top:293.27px;font-size:4.5px;color:#ffffff;letter-spacing:-0.05px">robot_arm_finger_05_sqt01_jnt</span>
<div style="left:60.85px;top:292.4px;width:4.4px;height:3.6px;border:0.6px solid rgba(185,180,160,0.42)"></div>
<svg style="left:72.0px;top:298.4px;" width="7" height="7.6" viewBox="0 0 7 7.6"><path d="M5.6 1 L1.6 3.8 L4.6 6.8" fill="none" stroke="#4a3f5e" stroke-width="2.2" stroke-linecap="round" stroke-linejoin="round"/><path d="M5.6 1 L1.6 3.8 L4.6 6.8" fill="none" stroke="#9d80c8" stroke-width="1.3" stroke-linecap="round" stroke-linejoin="round"/><circle cx="2.3" cy="3.8" r="0.55" fill="#3a3050"/></svg>
<span class="t" style="left:79.60000000000001px;top:301.27px;font-size:4.5px;color:#ffffff;letter-spacing:-0.05px">robot_arm_finger_05_sqt02_jnt</span>
<div style="left:65.6px;top:300.4px;width:4.4px;height:3.6px;border:0.6px solid rgba(185,180,160,0.42)"></div>
<svg style="left:76.75px;top:306.4px;" width="7" height="7.6" viewBox="0 0 7 7.6"><path d="M5.6 1 L1.6 3.8 L4.6 6.8" fill="none" stroke="#4a3f5e" stroke-width="2.2" stroke-linecap="round" stroke-linejoin="round"/><path d="M5.6 1 L1.6 3.8 L4.6 6.8" fill="none" stroke="#9d80c8" stroke-width="1.3" stroke-linecap="round" stroke-linejoin="round"/><circle cx="2.3" cy="3.8" r="0.55" fill="#3a3050"/></svg>
<span class="t" style="left:84.35000000000001px;top:309.27px;font-size:4.5px;color:#ffffff;letter-spacing:-0.05px">robot_arm_finger_05_sqt03_jnt</span>
<div style="left:70.35px;top:308.4px;width:4.4px;height:3.6px;border:0.6px solid rgba(185,180,160,0.42)"></div>
<svg style="left:81.5px;top:314.4px;" width="7" height="7.6" viewBox="0 0 7 7.6"><path d="M5.6 1 L1.6 3.8 L4.6 6.8" fill="none" stroke="#4a3f5e" stroke-width="2.2" stroke-linecap="round" stroke-linejoin="round"/><path d="M5.6 1 L1.6 3.8 L4.6 6.8" fill="none" stroke="#9d80c8" stroke-width="1.3" stroke-linecap="round" stroke-linejoin="round"/><circle cx="2.3" cy="3.8" r="0.55" fill="#3a3050"/></svg>
<span class="t" style="left:89.10000000000001px;top:317.27px;font-size:4.5px;color:#ffffff;letter-spacing:-0.05px">robot_arm_finger_05_sqt04_jnt</span>
<svg style="left:67.25px;top:322.4px;" width="7" height="7.6" viewBox="0 0 7 7.6"><path d="M5.6 1 L1.6 3.8 L4.6 6.8" fill="none" stroke="#4a3f5e" stroke-width="2.2" stroke-linecap="round" stroke-linejoin="round"/><path d="M5.6 1 L1.6 3.8 L4.6 6.8" fill="none" stroke="#9d80c8" stroke-width="1.3" stroke-linecap="round" stroke-linejoin="round"/><circle cx="2.3" cy="3.8" r="0.55" fill="#3a3050"/></svg>
<span class="t" style="left:74.85000000000001px;top:325.27px;font-size:4.5px;color:#ffffff;letter-spacing:-0.05px">robot_arm_finger_06_sqt01_jnt</span>
<div style="left:60.85px;top:324.4px;width:4.4px;height:3.6px;border:0.6px solid rgba(185,180,160,0.42)"></div>
<svg style="left:72.0px;top:330.4px;" width="7" height="7.6" viewBox="0 0 7 7.6"><path d="M5.6 1 L1.6 3.8 L4.6 6.8" fill="none" stroke="#4a3f5e" stroke-width="2.2" stroke-linecap="round" stroke-linejoin="round"/><path d="M5.6 1 L1.6 3.8 L4.6 6.8" fill="none" stroke="#9d80c8" stroke-width="1.3" stroke-linecap="round" stroke-linejoin="round"/><circle cx="2.3" cy="3.8" r="0.55" fill="#3a3050"/></svg>
<span class="t" style="left:79.60000000000001px;top:333.27px;font-size:4.5px;color:#ffffff;letter-spacing:-0.05px">robot_arm_finger_06_sqt02_jnt</span>
<div style="left:65.6px;top:332.4px;width:4.4px;height:3.6px;border:0.6px solid rgba(185,180,160,0.42)"></div>
<svg style="left:76.75px;top:338.4px;" width="7" height="7.6" viewBox="0 0 7 7.6"><path d="M5.6 1 L1.6 3.8 L4.6 6.8" fill="none" stroke="#4a3f5e" stroke-width="2.2" stroke-linecap="round" stroke-linejoin="round"/><path d="M5.6 1 L1.6 3.8 L4.6 6.8" fill="none" stroke="#9d80c8" stroke-width="1.3" stroke-linecap="round" stroke-linejoin="round"/><circle cx="2.3" cy="3.8" r="0.55" fill="#3a3050"/></svg>
<span class="t" style="left:84.35000000000001px;top:341.27px;font-size:4.5px;color:#ffffff;letter-spacing:-0.05px">robot_arm_finger_06_sqt03_jnt</span>
<div style="left:70.35px;top:340.4px;width:4.4px;height:3.6px;border:0.6px solid rgba(185,180,160,0.42)"></div>
<svg style="left:81.5px;top:346.4px;" width="7" height="7.6" viewBox="0 0 7 7.6"><path d="M5.6 1 L1.6 3.8 L4.6 6.8" fill="none" stroke="#4a3f5e" stroke-width="2.2" stroke-linecap="round" stroke-linejoin="round"/><path d="M5.6 1 L1.6 3.8 L4.6 6.8" fill="none" stroke="#9d80c8" stroke-width="1.3" stroke-linecap="round" stroke-linejoin="round"/><circle cx="2.3" cy="3.8" r="0.55" fill="#3a3050"/></svg>
<span class="t" style="left:89.10000000000001px;top:349.27px;font-size:4.5px;color:#ffffff;letter-spacing:-0.05px">robot_arm_finger_06_sqt04_jnt</span>
<svg style="left:33px;top:354.9px;" width="7" height="7" viewBox="0 0 7 7"><circle cx="3.5" cy="3.5" r="2.9" fill="#3a3a3a" stroke="#bdbdbd" stroke-width="0.6"/><path d="M3.5 1.3 L5.6 2.2 L5.6 5 L3.8 4.2Z" fill="#3aa0b8"/><path d="M1.6 5 L3.6 4 L5 5.2 L3 5.9Z" fill="#e8e8e8"/></svg>
<span class="t" style="left:41.1px;top:357.27px;font-size:4.5px;color:#c8c8c8;">defaultLightSet</span>
<svg style="left:33px;top:362.9px;" width="7" height="7" viewBox="0 0 7 7"><circle cx="3.5" cy="3.5" r="2.9" fill="#3a3a3a" stroke="#bdbdbd" stroke-width="0.6"/><path d="M3.5 1.3 L5.6 2.2 L5.6 5 L3.8 4.2Z" fill="#3aa0b8"/><path d="M1.6 5 L3.6 4 L5 5.2 L3 5.9Z" fill="#e8e8e8"/></svg>
<span class="t" style="left:41.1px;top:365.27px;font-size:4.5px;color:#c8c8c8;">defaultObjectSet</span>
<div style="left:178px;top:0px;width:733px;height:446px;background:#444444;"></div>
<div style="left:178px;top:1px;width:732px;height:0.8px;background:#5a5a5a;"></div>
<div style="left:909.3px;top:1px;width:0.9px;height:445px;background:#626262;"></div>
<div style="left:178px;top:1px;width:0.8px;height:445px;background:#505050;"></div>
<span class="t" style="left:182.5px;top:4.67px;font-size:4.7px;color:#b8b8b8;">View</span>
<span class="t" style="left:198px;top:4.67px;font-size:4.7px;color:#b8b8b8;">Shading</span>
<span class="t" style="left:221.5px;top:4.67px;font-size:4.7px;color:#b8b8b8;">Lighting</span>
<span class="t" style="left:244.5px;top:4.67px;font-size:4.7px;color:#b8b8b8;">Show</span>
<span class="t" style="left:262px;top:4.67px;font-size:4.7px;color:#b8b8b8;">Renderer</span>
<span class="t" style="left:287px;top:4.67px;font-size:4.7px;color:#b8b8b8;">Panels</span>
<div style="left:178px;top:18px;width:732px;height:427px;background:#5e5e5e;"></div>
<div style="left:178px;top:443.5px;width:732px;height:1.5px;background:#6a6a6a;"></div>
<div style="left:181px;top:11px;width:1px;height:4.5px;background:#666;"></div>
<div style="left:182.5px;top:9.5px;width:8px;height:7.5px;background:#5285a6;"></div>
<svg style="left:183px;top:10px;" width="7" height="6.5" viewBox="0 0 7 6.5"><rect x="1" y="0.5" width="5" height="5.5" fill="#3aa6cc"/><rect x="2.5" y="1.5" width="2" height="2" fill="#fff"/></svg>
<svg style="left:191px;top:10px;" width="7" height="6.5" viewBox="0 0 7 6.5"><rect x="1" y="1" width="5" height="4.5" fill="none" stroke="#3aa6cc" stroke-width="0.8"/><rect x="2.3" y="2.2" width="2.4" height="2" fill="#3aa6cc"/></svg>
<svg style="left:199px;top:10px;" width="7" height="6.5" viewBox="0 0 7 6.5"><rect x="0.5" y="1" width="6" height="4.5" fill="#4a5a66"/></svg>
<svg style="left:206px;top:10px;" width="7" height="6.5" viewBox="0 0 7 6.5"><circle cx="3.5" cy="3.2" r="2.5" fill="#4d555b"/></svg>
<svg style="left:213px;top:10px;" width="7" height="6.5" viewBox="0 0 7 6.5"><rect x="0.5" y="1" width="6" height="4.5" fill="#4a5661"/></svg>
<div style="left:221px;top:11px;width:0.8px;height:4.5px;background:#666;"></div>
<svg style="left:223px;top:10px;" width="7" height="6.5" viewBox="0 0 7 6.5"><rect x="0.5" y="2" width="5" height="2.5" fill="#ddd"/><path d="M5.5 3.2 L7 2 V4.5Z" fill="#ddd"/></svg>
<svg style="left:231px;top:10px;" width="7" height="6.5" viewBox="0 0 7 6.5"><rect x="0.5" y="1" width="3.5" height="4.5" fill="none" stroke="#3aa6cc" stroke-width="0.8"/><path d="M4.5 1 H7 M4.5 2.5 H7" stroke="#ddd" stroke-width="0.7"/></svg>
<svg style="left:239px;top:10px;" width="7" height="6.5" viewBox="0 0 7 6.5"><rect x="0.5" y="1" width="3.5" height="4.5" fill="none" stroke="#3aa6cc" stroke-width="0.8"/><path d="M4.5 1 H7 M4.5 2.5 H7" stroke="#ddd" stroke-width="0.7"/></svg>
<svg style="left:247px;top:10px;" width="7" height="6.5" viewBox="0 0 7 6.5"><rect x="2.3" y="0.8" width="2.2" height="5" fill="#ddd"/></svg>
<svg style="left:255px;top:10px;" width="7" height="6.5" viewBox="0 0 7 6.5"><path d="M1 6 L3.5 1 L6 6" fill="none" stroke="#3aa6cc" stroke-width="0.8"/><path d="M3.5 1 V5" stroke="#ddd" stroke-width="0.7"/></svg>
<svg style="left:262px;top:10px;" width="7" height="6.5" viewBox="0 0 7 6.5"><circle cx="3.5" cy="3.5" r="2.3" fill="none" stroke="#3aa6cc" stroke-width="0.8"/><path d="M2 1 L5 5" stroke="#ddd" stroke-width="0.7"/></svg>
<svg style="left:270px;top:10px;" width="7" height="6.5" viewBox="0 0 7 6.5"><path d="M1 6 L6 1" stroke="#3aa6cc" stroke-width="1.1"/></svg>
<div style="left:278.5px;top:11px;width:0.8px;height:4.5px;background:#666;"></div>
<div style="left:280.5px;top:9.5px;width:8px;height:7.5px;background:#3d4a57;"></div>
<svg style="left:281px;top:10px;" width="7" height="6.5" viewBox="0 0 7 6.5"><rect x="0.8" y="0.8" width="5.4" height="5" fill="#777" stroke="#aaa" stroke-width="0.5"/></svg>
<svg style="left:289px;top:10px;" width="7" height="6.5" viewBox="0 0 7 6.5"><rect x="0.5" y="1" width="6" height="4.5" fill="none" stroke="#ccc" stroke-width="0.7"/><path d="M0.5 2.5 H6.5" stroke="#ccc" stroke-width="0.7"/></svg>
<svg style="left:297px;top:10px;" width="7" height="6.5" viewBox="0 0 7 6.5"><rect x="0.5" y="1" width="6" height="4.5" fill="none" stroke="#ccc" stroke-width="0.7"/><rect x="2.5" y="2.5" width="2" height="1.8" fill="#3aa6cc"/></svg>
<svg style="left:305px;top:10px;" width="7" height="6.5" viewBox="0 0 7 6.5"><rect x="0.5" y="1" width="6" height="4.5" fill="none" stroke="#555" stroke-width="0.7"/></svg>
<svg style="left:313px;top:10px;" width="7" height="6.5" viewBox="0 0 7 6.5"><rect x="0.5" y="1" width="6" height="4.5" fill="none" stroke="#ccc" stroke-width="0.7"/><path d="M3.5 1 V5.5 M0.5 3.2 H6.5" stroke="#3aa6cc" stroke-width="0.6"/></svg>
<svg style="left:321px;top:10px;" width="7" height="6.5" viewBox="0 0 7 6.5"><rect x="0.5" y="1" width="6" height="4.5" fill="none" stroke="#ccc" stroke-width="0.7"/><path d="M2 4.5 L5 1.8" stroke="#3aa6cc" stroke-width="0.8"/></svg>
<svg style="left:329px;top:10px;" width="7" height="6.5" viewBox="0 0 7 6.5"><rect x="0.5" y="1" width="6" height="4.5" fill="none" stroke="#ccc" stroke-width="0.7"/><path d="M2 2 H5 M3.5 2 V5" stroke="#ddd" stroke-width="0.7"/></svg>
<div style="left:337px;top:11px;width:0.8px;height:4.5px;background:#666;"></div>
<svg style="left:340px;top:10px;" width="7" height="6.5" viewBox="0 0 7 6.5"><path d="M3.5 0.8 L6.3 2.2 V5 L3.5 6.3 L0.7 5 V2.2Z" fill="none" stroke="#bbb" stroke-width="0.5"/><path d="M0.7 2.2 L3.5 3.5 L6.3 2.2 M3.5 3.5 V6.3" stroke="#999" stroke-width="0.4" fill="none"/></svg>
<div style="left:347.2px;top:9.3px;width:8.6px;height:7.6px;background:transparent;border:0.6px solid #3d7ea6"></div>
<svg style="left:348px;top:10px;" width="7" height="6.5" viewBox="0 0 7 6.5"><path d="M3.5 0.8 L6.3 2.2 V5 L3.5 6.3 L0.7 5 V2.2Z" fill="#3b8fae" stroke="#bfd8e2" stroke-width="0.5"/><path d="M0.7 2.2 L3.5 3.5 L6.3 2.2 M3.5 3.5 V6.3" stroke="#bfd8e2" stroke-width="0.4" fill="none"/></svg>
<svg style="left:356px;top:10px;" width="7" height="6.5" viewBox="0 0 7 6.5"><circle cx="3.5" cy="3.3" r="2.6" fill="#bbb"/><path d="M3.5 0.7 A2.6 2.6 0 0 1 3.5 5.9Z" fill="#777"/></svg>
<svg style="left:364px;top:10px;" width="7" height="6.5" viewBox="0 0 7 6.5"><circle cx="3.5" cy="3.3" r="2.7" fill="#4f7f90" stroke="#aaa" stroke-width="0.5"/><path d="M0.8 3.3 H6.2 M3.5 0.6 V6" stroke="#aaa" stroke-width="0.4"/></svg>
<svg style="left:372px;top:10px;" width="7" height="6.5" viewBox="0 0 7 6.5"><circle cx="3.5" cy="3.3" r="2.4" fill="#888"/><path d="M1.5 1.5 L5.5 5.5" stroke="#444" stroke-width="0.6"/></svg>
<svg style="left:380px;top:10px;" width="7" height="6.5" viewBox="0 0 7 6.5"><path d="M3.5 1 V6 M1 1.5 L3.5 3.5 L6 1.5" stroke="#ddd" stroke-width="0.7" fill="none"/></svg>
<svg style="left:388px;top:10px;" width="7" height="6.5" viewBox="0 0 7 6.5"><path d="M2 3.5 L4 1.5 L6 3.5 L4 5.5Z" fill="#3aa6cc"/><rect x="0.5" y="4.5" width="2" height="1" fill="#aaa"/></svg>
<div style="left:396px;top:11px;width:0.8px;height:4.5px;background:#666;"></div>
<svg style="left:398px;top:10px;" width="7" height="6.5" viewBox="0 0 7 6.5"><circle cx="3.5" cy="2.8" r="2.2" fill="#ccc"/><path d="M1 5 Q3.5 6.5 6 5" stroke="#3aa6cc" stroke-width="0.7" fill="none"/></svg>
<svg style="left:406px;top:10px;" width="7" height="6.5" viewBox="0 0 7 6.5"><path d="M1.2 5.5 L5.5 1.5" stroke="#aaa" stroke-width="1.6"/><circle cx="5" cy="2" r="1" fill="#ccc"/></svg>
<svg style="left:414px;top:10px;" width="7" height="6.5" viewBox="0 0 7 6.5"><path d="M3 1 A2.5 2.5 0 0 1 3 6" stroke="#3aa6cc" stroke-width="0.8" fill="none"/><path d="M3 1 L1 3.5 L3 6" stroke="#ddd" stroke-width="0.6" fill="none"/></svg>
<svg style="left:422px;top:10px;" width="7" height="6.5" viewBox="0 0 7 6.5"><rect x="0.5" y="0.8" width="6" height="5" fill="#3a4650"/></svg>
<div style="left:431px;top:11px;width:0.8px;height:4.5px;background:#666;"></div>
<svg style="left:434px;top:10px;" width="7" height="6.5" viewBox="0 0 7 6.5"><path d="M1 1 H4 V3 M3 3 L6 6" stroke="#3aa6cc" stroke-width="0.7" fill="none"/><path d="M4 3 L6 6" stroke="#ddd" stroke-width="0.7"/></svg>
<div style="left:443px;top:11px;width:0.8px;height:4.5px;background:#666;"></div>
<svg style="left:446px;top:10px;" width="7" height="6.5" viewBox="0 0 7 6.5"><rect x="0.5" y="2" width="4" height="4" fill="#ddd"/><rect x="2.5" y="0.5" width="4" height="4" fill="none" stroke="#ddd" stroke-width="0.6"/></svg>
<svg style="left:454px;top:10px;" width="7" height="6.5" viewBox="0 0 7 6.5"><rect x="0.5" y="2.5" width="5" height="3.5" fill="#ddd"/><path d="M1.5 2.5 V1 H4.5 V2.5" stroke="#ddd" stroke-width="0.6" fill="none"/></svg>
<div style="left:461.5px;top:9.5px;width:8px;height:7.5px;background:#3d4a57;"></div>
<svg style="left:462px;top:10px;" width="7" height="6.5" viewBox="0 0 7 6.5"><rect x="0.5" y="0.8" width="6" height="5" fill="none" stroke="#ddd" stroke-width="0.6"/><path d="M1.5 2 L5.5 5" stroke="#ddd" stroke-width="0.6"/></svg>
<div style="left:471px;top:11px;width:0.8px;height:4.5px;background:#666;"></div>
<svg style="left:473px;top:10px;" width="7" height="6.5" viewBox="0 0 7 6.5"><circle cx="3.5" cy="3.3" r="2.2" fill="none" stroke="#ddd" stroke-width="0.9"/><circle cx="3.5" cy="3.3" r="0.8" fill="#ddd"/></svg>
<div style="left:481px;top:10px;width:15px;height:6px;background:#2b2b2b;"></div>
<span class="t" style="left:483.5px;top:12.07px;font-size:4.5px;color:#9a9a9a;">0.00</span>
<svg style="left:498px;top:10px;" width="7" height="6.5" viewBox="0 0 7 6.5"><path d="M3.5 0.8 A2.5 2.5 0 0 1 3.5 5.8" stroke="#ddd" stroke-width="1" fill="none"/><path d="M3.5 0.8 A2.5 2.5 0 0 0 3.5 5.8" stroke="#777" stroke-width="0.6" fill="none"/></svg>
<div style="left:505px;top:10px;width:15px;height:6px;background:#2b2b2b;"></div>
<span class="t" style="left:507.5px;top:12.07px;font-size:4.5px;color:#b0b0b0;">1.00</span>
<div style="left:521px;top:9.5px;width:8px;height:7px;background:#3a92b4;border:0.5px solid #5ab0d0"></div>
<svg style="left:521px;top:9.5px;" width="8" height="7" viewBox="0 0 8 7"><path d="M1.5 2.5 Q4 0.5 6.5 2.5 M1.5 4.5 Q4 6.5 6.5 4.5" stroke="#1a5a70" stroke-width="0.7" fill="none"/></svg>
<div style="left:530px;top:10px;width:71px;height:6px;background:#555;"></div>
<span class="t" style="left:532px;top:12.07px;font-size:4.5px;color:#b4b4b4;letter-spacing:-0.2px">ACES 1.0 SDR-video (sRGB)</span>
<div style="left:602px;top:10px;width:7px;height:6px;background:#555;"></div>
<svg style="left:602px;top:10px;" width="7" height="6" viewBox="0 0 7 6"><path d="M1.8 2.2 H5.2 L3.5 4Z" fill="#ddd"/></svg>
<svg style="left:0;top:0" width="1023" height="482" viewBox="0 0 1023 482"><defs><linearGradient id="fa" x1="0" y1="0" x2="0" y2="1"><stop offset="0" stop-color="#d8d8d8"/><stop offset="0.35" stop-color="#efefef"/><stop offset="1" stop-color="#cfcfcf"/></linearGradient><linearGradient id="ring" x1="0" y1="0" x2="0" y2="1"><stop offset="0" stop-color="#ececec"/><stop offset="1" stop-color="#d6d6d6"/></linearGradient><linearGradient id="plat" x1="0" y1="0" x2="0" y2="1"><stop offset="0" stop-color="#2a2a2a"/><stop offset="0.2" stop-color="#333"/><stop offset="0.5" stop-color="#3c3c3c"/><stop offset="1" stop-color="#383838"/></linearGradient><linearGradient id="dk" x1="0" y1="0" x2="0" y2="1"><stop offset="0" stop-color="#454545"/><stop offset="0.45" stop-color="#333"/><stop offset="1" stop-color="#292929"/></linearGradient></defs><path d="M488.7 257.5 L516 257 L521.8 318.7 L505.6 321.8 Z" fill="#e0e0e0"/><path d="M492 211 L537 193.5 L556 213 L520 246 Z" fill="#e3e3e3"/><circle cx="561.3" cy="192.8" r="24.4" fill="#e4e4e4" stroke="#9a9a9a" stroke-width="0.35"/><circle cx="558.8" cy="200.5" r="9.3" fill="#4b4b4b"/><path d="M551 196 A9.3 9.3 0 0 1 556 191.5" stroke="#aaa" stroke-width="1.2" fill="none" opacity="0.7"/><path d="M527.6 176 L602.2 176 L602.2 186.5 Q566 193 527.6 186.5 Z" fill="url(#ring)"/><path d="M527.6 186.5 Q566 193 602.2 186.5" stroke="#b5b5b5" stroke-width="0.6" fill="none"/><path d="M508.5 160 Q509 155.8 516 155.5 L620 156 Q626.5 156.3 626.5 160 L626.5 172 Q626 174.5 620 175.5 Q566 180.5 513 175.5 Q509 174.5 508.8 171.5 Z" fill="url(#plat)"/><path d="M509 160 Q509.5 156 516 155.7 L620 156.2 Q626 156.5 626.3 160 Q566 156.5 509 160 Z" fill="#222"/><rect x="521" y="163" width="4.5" height="9" fill="#2e2e2e"/><rect x="534.5" y="160" width="2.2" height="17" fill="#333"/><rect x="600" y="159" width="14" height="18" fill="#404040"/><rect x="614" y="159" width="4" height="17" fill="#4a4a4a"/><rect x="618.5" y="161.5" width="7.5" height="12.5" fill="#3d3d3d"/><circle cx="497.9" cy="234.2" r="24.4" fill="#e3e3e3" stroke="#9a9a9a" stroke-width="0.35"/><circle cx="498.4" cy="235.8" r="9.4" fill="#4b4b4b"/><path d="M550 198.5 L498.5 234.5" stroke="#f4f4f4" stroke-width="0.9"/><path d="M498.5 234.5 L515.5 323.5" stroke="#f4f4f4" stroke-width="0.9"/><path d="M497.5 236 L500.5 250" stroke="#bbb" stroke-width="0.9" stroke-dasharray="0.6 0.6"/><path d="M565.5 156 L559.5 192.5" stroke="#d9885a" stroke-width="1.1"/><path d="M550 198.5 L558.5 192.5" stroke="#c8c8c8" stroke-width="1.2" stroke-dasharray="0.7 0.5"/><path d="M511 326 L522.5 344.5 L532 339.5 L520.5 321 Z" fill="#303030"/><ellipse cx="515.5" cy="323.7" rx="9.2" ry="8" fill="url(#dk)"/><ellipse cx="516" cy="323" rx="5.6" ry="4.8" fill="#404040" stroke="#262626" stroke-width="0.6"/><ellipse cx="528.4" cy="343" rx="8" ry="9.6" fill="url(#dk)"/><ellipse cx="529.5" cy="341.5" rx="5" ry="5.6" fill="#3e3e3e" stroke="#262626" stroke-width="0.6"/><path d="M536 334.3 L570 337 Q578 338 578.5 345 L578 356 Q577 363 570 362.7 L536 359.8 Q533 352 533 347 Q533 338 536 334.3 Z" fill="url(#fa)"/><path d="M576.4 341.7 L587.6 342.5 L587.6 362.5 L576.4 362.3 Z" fill="url(#dk)"/><path d="M587.6 347.1 L612 349.5 L612 361.8 L587.6 359.3 Z" fill="url(#fa)"/><path d="M612 350 L618.4 350.5 L618.4 363.7 L612 363 Z" fill="url(#dk)"/><path d="M618 353 L640.4 354 L640.4 364.7 L618 362.7 Z" fill="url(#dk)"/><path d="M640 353.5 L646.2 354 L646.2 367 L640 366.5 Z" fill="url(#dk)"/><path d="M646 357.5 L652 358.5 L652 365 L646 364.5 Z" fill="#2e2e2e"/><path d="M528.6 343 L515.5 323.5" stroke="#f0f0f0" stroke-width="0.7"/><path d="M527 343.5 L570 348.8 L652 361.6" stroke="#f6f6f6" stroke-width="0.9"/><path d="M651 358.5 L656.5 355.8 L663.5 357 L666 361.5 L663.5 368.5 L656 370 L651 366.5 Z" fill="#6a6a6a" stroke="#e8e8e8" stroke-width="0.6"/><path d="M651 362 L666 362 M656.5 355.8 L656 370 M661 356.5 L660.5 369.5 M652 359 L663.5 366" stroke="#d8d8d8" stroke-width="0.45" fill="none"/><circle cx="653" cy="359" r="0.7" fill="#e08a50"/><circle cx="664" cy="366" r="0.7" fill="#40c0d0"/><circle cx="658" cy="368" r="0.6" fill="#e08a50"/><circle cx="661" cy="358.5" r="0.6" fill="#e08a50"/><circle cx="652.5" cy="365" r="0.5" fill="#7070e0"/></svg>
<svg style="left:876px;top:31px;" width="23" height="22" viewBox="0 0 23 22"><path d="M2.6 1 L21.8 1 L21.6 20.6 L2.8 20.8Z" fill="#b6b6b6"/><path d="M2.6 1 L2.8 20.8 L1.2 19.6 L1 2.2Z" fill="#8a8a8a"/><text x="12.2" y="12.4" font-size="3.6" text-anchor="middle" fill="#5a5a5a" font-family="Liberation Sans" letter-spacing="0.2">BACK</text></svg>
<svg style="left:180px;top:424px;" width="12" height="14" viewBox="0 0 12 14"><path d="M9 11 H3" stroke="#d03030" stroke-width="1"/><circle cx="2.5" cy="10.5" r="1.2" fill="#e03030"/><path d="M9 11 V3" stroke="#40c040" stroke-width="1"/><circle cx="8.5" cy="3" r="1.2" fill="#40d040"/><path d="M9 10 L7.5 8" stroke="#3040e0" stroke-width="1.2"/></svg>
<span class="t" style="left:536px;top:440.27px;font-size:4.8px;color:#e8e8e8;font-weight:bold">persp</span>
<div style="left:178px;top:19px;width:218px;height:227.3px;background:#3a3a3a;box-shadow:1px 1px 4px 1px rgba(0,0,0,0.28)"></div>
<div style="left:178px;top:19px;width:218px;height:12px;background:#f3f3f3;border-radius:1.5px 1.5px 0 0"></div>
<svg style="left:181.3px;top:21px;" width="6.5" height="7.5" viewBox="0 0 6.5 7.5"><rect x="0" y="0" width="6.5" height="7.5" rx="1" fill="#1d6f8c"/><rect x="0" y="0" width="6.5" height="5.6" rx="1" fill="#3aa9d6"/><path d="M1.4 4.6 V1.2 L3.25 3 L5.1 1.2 V4.6" stroke="#fff" stroke-width="0.8" fill="none" stroke-linejoin="miter"/><rect x="1.6" y="6.1" width="3.3" height="0.7" fill="#9cc"/></svg>
<span class="t" style="left:190px;top:23.87px;font-size:4.9px;color:#6a6a6a;letter-spacing:-0.1px;">Bake Simulation Options</span>
<div style="left:348.7px;top:24.3px;width:4.3px;height:0.6px;background:#777;"></div>
<div style="left:366.5px;top:22.2px;width:4.3px;height:4.3px;background:transparent;border:0.6px solid #888;border-radius:0.8px"></div>
<svg style="left:384.5px;top:22px;" width="5" height="5" viewBox="0 0 5 5"><path d="M0.5 0.5 L4.5 4.5 M4.5 0.5 L0.5 4.5" stroke="#888" stroke-width="0.6"/></svg>
<div style="left:178px;top:31px;width:218px;height:215.3px;background:#444444;border-right:0.6px solid #3a3a3a;border-bottom:0.8px solid #3a3a3a"></div>
<span class="t" style="left:182px;top:34.07px;font-size:4.7px;color:#b8b8b8;letter-spacing:-0.1px;">Edit</span>
<span class="t" style="left:196px;top:34.07px;font-size:4.7px;color:#b8b8b8;letter-spacing:-0.1px;">Help</span>
<div style="left:180.5px;top:39px;width:215px;height:192px;background:#454545;border-left:0.8px solid #393939;border-top:0.6px solid #3c3c3c;border-bottom:0.8px solid #393939"></div>
<div style="left:394.5px;top:39px;width:1.5px;height:192px;background:#3a3a3a;"></div>
<span class="t" style="right:774px;top:46.07px;font-size:4.7px;color:#b0b0b0;letter-spacing:-0.12px;">Hierarchy:</span>
<div style="left:253.7px;top:45.0px;width:3.6px;height:3.6px;border-radius:50%;background:#2b2b2b"></div>
<span class="t" style="left:260.3px;top:46.07px;font-size:4.7px;color:#b0b0b0;letter-spacing:-0.1px;">Selected</span>
<div style="left:318.5px;top:45.0px;width:3.6px;height:3.6px;border-radius:50%;background:#2b2b2b"></div><div style="left:319.3px;top:45.8px;width:2px;height:2px;border-radius:50%;background:#f0f0f0"></div>
<span class="t" style="left:325px;top:46.07px;font-size:4.7px;color:#b0b0b0;letter-spacing:-0.1px;">Below</span>
<span class="t" style="right:774px;top:54.07px;font-size:4.7px;color:#b0b0b0;letter-spacing:-0.12px;">Channels:</span>
<div style="left:253.7px;top:53.2px;width:3.6px;height:3.6px;border-radius:50%;background:#2b2b2b"></div><div style="left:254.5px;top:54px;width:2px;height:2px;border-radius:50%;background:#f0f0f0"></div>
<span class="t" style="left:260.3px;top:54.27px;font-size:4.7px;color:#b0b0b0;letter-spacing:-0.1px;">All keyable</span>
<div style="left:318.5px;top:53.2px;width:3.6px;height:3.6px;border-radius:50%;background:#2b2b2b"></div>
<span class="t" style="left:325px;top:54.27px;font-size:4.7px;color:#b0b0b0;letter-spacing:-0.1px;">From Channel Box</span>
<span class="t" style="right:774px;top:61.07px;font-size:4.7px;color:#b0b0b0;letter-spacing:-0.12px;">Driven channels:</span>
<div style="left:253.5px;top:59.199999999999996px;width:5.2px;height:5.2px;background:#2b2b2b;"></div>
<span class="t" style="right:774px;top:67.07px;font-size:4.7px;color:#b0b0b0;letter-spacing:-0.12px;">Control points:</span>
<div style="left:253px;top:65.2px;width:5.2px;height:5.2px;background:#2b2b2b;"></div>
<span class="t" style="right:774px;top:73.37px;font-size:4.7px;color:#b0b0b0;letter-spacing:-0.12px;">Shapes:</span>
<div style="left:253px;top:71.2px;width:5.2px;height:5.2px;background:#2b2b2b;"></div>
<svg style="left:253px;top:71.2px;" width="5.2" height="5.2" viewBox="0 0 5.2 5.2"><path d="M1.1 2.8 L2.2 4 L4.3 1" stroke="#f0f0f0" stroke-width="0.8" fill="none"/></svg>
<div style="left:184px;top:78.4px;width:208px;height:0.8px;background:#393939;"></div>
<span class="t" style="right:774px;top:83.07px;font-size:4.7px;color:#b0b0b0;letter-spacing:-0.12px;">Time range:</span>
<div style="left:253.7px;top:82.2px;width:3.6px;height:3.6px;border-radius:50%;background:#2b2b2b"></div><div style="left:254.5px;top:83px;width:2px;height:2px;border-radius:50%;background:#f0f0f0"></div>
<span class="t" style="left:260.3px;top:83.27px;font-size:4.7px;color:#b0b0b0;letter-spacing:-0.1px;">Time Slider</span>
<div style="left:318.5px;top:82.2px;width:3.6px;height:3.6px;border-radius:50%;background:#2b2b2b"></div>
<span class="t" style="left:325px;top:83.27px;font-size:4.7px;color:#b0b0b0;letter-spacing:-0.1px;">Start/End</span>
<span class="t" style="right:774px;top:91.87px;font-size:4.7px;color:#6a6a6a;letter-spacing:-0.12px;">Start time:</span>
<div style="left:255px;top:89.8px;width:31px;height:6.2px;background:#3f3f3f;"></div>
<span class="t" style="left:256.8px;top:91.87px;font-size:4.5px;color:#6a6a6a;letter-spacing:-0.1px;">0.0000</span>
<span class="t" style="right:774px;top:100.47px;font-size:4.7px;color:#6a6a6a;letter-spacing:-0.12px;">End time:</span>
<div style="left:255px;top:98.4px;width:31px;height:6.2px;background:#3f3f3f;"></div>
<span class="t" style="left:256.8px;top:100.47px;font-size:4.5px;color:#6a6a6a;letter-spacing:-0.1px;">10.0000</span>
<div style="left:184px;top:107px;width:208px;height:0.8px;background:#393939;"></div>
<span class="t" style="right:774px;top:111.87px;font-size:4.7px;color:#b0b0b0;letter-spacing:-0.12px;">Bake to:</span>
<div style="left:252.0px;top:110.60000000000001px;width:3.6px;height:3.6px;border-radius:50%;background:#2b2b2b"></div><div style="left:252.8px;top:111.4px;width:2px;height:2px;border-radius:50%;background:#f0f0f0"></div>
<span class="t" style="left:258.8px;top:111.87px;font-size:4.7px;color:#b0b0b0;letter-spacing:-0.1px;">BaseAnimation</span>
<div style="left:316.5px;top:110.60000000000001px;width:3.6px;height:3.6px;border-radius:50%;background:#2b2b2b"></div>
<span class="t" style="left:324px;top:111.87px;font-size:4.7px;color:#b0b0b0;letter-spacing:-0.1px;">New Layer</span>
<span class="t" style="right:774px;top:120.07px;font-size:4.7px;color:#b0b0b0;letter-spacing:-0.12px;">Baked layers:</span>
<div style="left:252px;top:117.5px;width:47px;height:6.6px;background:#555;"></div>
<span class="t" style="left:254px;top:120.07px;font-size:4.7px;color:#c8c8c8;letter-spacing:-0.1px;">Keep</span>
<div style="left:299.5px;top:117.5px;width:7px;height:6.6px;background:#5a5a5a;"></div>
<svg style="left:299.5px;top:117.5px;" width="7" height="6.6" viewBox="0 0 7 6.6"><path d="M1.8 2.4 H5.2 L3.5 4.2Z" fill="#ddd"/></svg>
<div style="left:182.5px;top:126.8px;width:209.5px;height:0.8px;background:#393939;"></div>
<span class="t" style="right:774px;top:130.87px;font-size:4.7px;color:#b0b0b0;letter-spacing:-0.12px;">Sample by:</span>
<div style="left:252px;top:128.4px;width:31px;height:6.2px;background:#2b2b2b;"></div>
<span class="t" style="left:253.8px;top:130.47px;font-size:4.5px;color:#d0d0d0;letter-spacing:-0.1px;">1.0000</span>
<span class="t" style="right:774px;top:139.27px;font-size:4.7px;color:#b0b0b0;letter-spacing:-0.12px;">Oversampling Rate:</span>
<div style="left:252px;top:137.2px;width:31px;height:6.2px;background:#2b2b2b;"></div>
<span class="t" style="left:253.8px;top:139.27px;font-size:4.5px;color:#d0d0d0;letter-spacing:-0.1px;">1</span>
<div style="left:182.5px;top:145.6px;width:209.5px;height:0.8px;background:#393939;"></div>
<span class="t" style="right:774px;top:149.07px;font-size:4.7px;color:#b0b0b0;letter-spacing:-0.12px;">Smart Bake:</span>
<div style="left:252px;top:147.20000000000002px;width:5.2px;height:5.2px;background:#2b2b2b;"></div>
<span class="t" style="right:774px;top:155.07px;font-size:4.7px;color:#6a6a6a;letter-spacing:-0.12px;">Increase Fidelity:</span>
<div style="left:252px;top:153.20000000000002px;width:5.2px;height:5.2px;background:#2b2b2b;"></div>
<span class="t" style="right:774px;top:162.47px;font-size:4.7px;color:#6a6a6a;letter-spacing:-0.12px;">Fidelity Keys Tolerance:</span>
<div style="left:252px;top:160.2px;width:31px;height:6.2px;background:#3f3f3f;"></div>
<span class="t" style="left:253.8px;top:162.27px;font-size:4.5px;color:#6a6a6a;letter-spacing:-0.1px;">5.0000</span>
<span class="t" style="left:284px;top:162.37px;font-size:4.7px;color:#6a6a6a;letter-spacing:-0.1px;">%</span>
<div style="left:182.5px;top:168.3px;width:209.5px;height:0.8px;background:#393939;"></div>
<span class="t" style="right:774px;top:171.67px;font-size:4.7px;color:#b0b0b0;letter-spacing:-0.12px;">Run simulation:</span>
<div style="left:252px;top:169.8px;width:5.2px;height:5.2px;background:#2b2b2b;"></div>
<svg style="left:252px;top:169.8px;" width="5.2" height="5.2" viewBox="0 0 5.2 5.2"><path d="M1.1 2.8 L2.2 4 L4.3 1" stroke="#f0f0f0" stroke-width="0.8" fill="none"/></svg>
<span class="t" style="right:774px;top:177.77px;font-size:4.7px;color:#b0b0b0;letter-spacing:-0.12px;">Keep unbaked keys:</span>
<div style="left:252px;top:176.0px;width:5.2px;height:5.2px;background:#2b2b2b;"></div>
<svg style="left:252px;top:176.0px;" width="5.2" height="5.2" viewBox="0 0 5.2 5.2"><path d="M1.1 2.8 L2.2 4 L4.3 1" stroke="#f0f0f0" stroke-width="0.8" fill="none"/></svg>
<span class="t" style="right:774px;top:183.77px;font-size:4.7px;color:#b0b0b0;letter-spacing:-0.12px;">Sparse curve bake:</span>
<div style="left:252px;top:182.0px;width:5.2px;height:5.2px;background:#2b2b2b;"></div>
<span class="t" style="right:774px;top:189.67px;font-size:4.7px;color:#b0b0b0;letter-spacing:-0.12px;">Disable implicit control:</span>
<div style="left:252px;top:187.9px;width:5.2px;height:5.2px;background:#2b2b2b;"></div>
<svg style="left:252px;top:187.9px;" width="5.2" height="5.2" viewBox="0 0 5.2 5.2"><path d="M1.1 2.8 L2.2 4 L4.3 1" stroke="#f0f0f0" stroke-width="0.8" fill="none"/></svg>
<span class="t" style="right:774px;top:195.77px;font-size:4.7px;color:#b0b0b0;letter-spacing:-0.12px;">Unroll Rotation:</span>
<div style="left:252px;top:194.0px;width:5.2px;height:5.2px;background:#2b2b2b;"></div>
<svg style="left:252px;top:194.0px;" width="5.2" height="5.2" viewBox="0 0 5.2 5.2"><path d="M1.1 2.8 L2.2 4 L4.3 1" stroke="#f0f0f0" stroke-width="0.8" fill="none"/></svg>
<div style="left:182px;top:200.2px;width:210px;height:7.4px;background:#5a5a5a;"></div>
<svg style="left:184.5px;top:201.5px;" width="5" height="4" viewBox="0 0 5 4"><path d="M0.5 0.8 H4.2 L2.35 3.2Z" fill="#eee"/></svg>
<span class="t" style="left:194.8px;top:203.07px;font-size:4.7px;color:#c8c8c8;letter-spacing:-0.1px;">Performance Settings</span>
<span class="t" style="right:774px;top:212.07px;font-size:4.7px;color:#b0b0b0;letter-spacing:-0.12px;">Evaluation mode:</span>
<div style="left:253.5px;top:209.6px;width:23px;height:6.8px;background:#4e4e4e;"></div>
<span class="t" style="left:255px;top:212.07px;font-size:4.7px;color:#c8c8c8;letter-spacing:-0.1px;">Parallel</span>
<div style="left:278px;top:209.6px;width:7.5px;height:6.8px;background:#555;"></div>
<svg style="left:278px;top:209.6px;" width="7.5" height="6.8" viewBox="0 0 7.5 6.8"><path d="M2 2.5 H5.5 L3.75 4.3Z" fill="#ddd"/></svg>
<span class="t" style="right:773.5px;top:221.97px;font-size:4.7px;color:#b0b0b0;letter-spacing:-0.12px;">Pause viewport update:</span>
<div style="left:253px;top:220.20000000000002px;width:5.2px;height:5.2px;background:#2b2b2b;"></div>
<svg style="left:253px;top:220.20000000000002px;" width="5.2" height="5.2" viewBox="0 0 5.2 5.2"><path d="M1.1 2.8 L2.2 4 L4.3 1" stroke="#f0f0f0" stroke-width="0.8" fill="none"/></svg>
<div style="left:180px;top:233.6px;width:70px;height:11.4px;background:#5b5b5b;border-bottom:0.7px solid #393939;border-top:0.5px solid #666"></div>
<span class="t" style="left:165.0px;width:100px;text-align:center;top:239.07px;font-size:4.7px;color:#d8d8d8;">Bake</span>
<div style="left:251.5px;top:233.6px;width:71.0px;height:11.4px;background:#5b5b5b;border-bottom:0.7px solid #393939;border-top:0.5px solid #666"></div>
<span class="t" style="left:237.0px;width:100px;text-align:center;top:239.07px;font-size:4.7px;color:#d8d8d8;">Apply</span>
<div style="left:323.8px;top:233.6px;width:70.69999999999999px;height:11.4px;background:#5b5b5b;border-bottom:0.7px solid #393939;border-top:0.5px solid #666"></div>
<span class="t" style="left:309.15px;width:100px;text-align:center;top:239.07px;font-size:4.7px;color:#d8d8d8;">Close</span>
<div style="left:910.1px;top:0px;width:113px;height:446px;background:#444444;"></div>
<div style="left:909.2px;top:1px;width:1px;height:445px;background:#666;"></div>
<div style="left:910.3px;top:18px;width:1.5px;height:428px;background:#3a3a3a;"></div>
<svg style="left:991px;top:2px;" width="24" height="8" viewBox="0 0 24 8"><path d="M3.5 1 L3.5 4 M1 7 L3.5 4 L6 7" stroke="#aaa" stroke-width="0.6" fill="none"/><circle cx="3.5" cy="1.3" r="1" fill="#40c040"/><circle cx="1.2" cy="6.8" r="1" fill="#3070e0"/><circle cx="5.8" cy="6.8" r="1" fill="#e05030"/><path d="M9.5 7 A3 3 0 1 1 15 6" stroke="#3aa6cc" stroke-width="1.3" fill="none"/><circle cx="12.5" cy="4.5" r="1" fill="#3aa6cc"/><path d="M18.5 7.3 V1 M18.5 7.3 H23.5" stroke="#666" stroke-width="0.6" fill="none"/><path d="M19 6.5 L23 2" stroke="#3aa6cc" stroke-width="1"/></svg>
<span class="t" style="left:917px;top:13.07px;font-size:4.7px;color:#b8b8b8;">Channels</span>
<span class="t" style="left:941.5px;top:13.07px;font-size:4.7px;color:#b8b8b8;">Edit</span>
<span class="t" style="left:955.8px;top:13.07px;font-size:4.7px;color:#b8b8b8;">Object</span>
<span class="t" style="left:975.2px;top:13.07px;font-size:4.7px;color:#b8b8b8;">Show</span>
<span class="t" style="left:915px;top:22.27px;font-size:4.5px;color:#c8c8c8;letter-spacing:-0.17px">robot_arm_finger_06_sqt04_jnt . . .</span>
<div style="left:984px;top:26.0px;width:29.5px;height:5.6px;background:#2b2b2b;"></div>
<span class="t" style="right:40.799999999999955px;top:27.77px;font-size:4.6px;color:#9c9c9c;letter-spacing:-0.08px">Translate X</span>
<span class="t" style="left:987.5px;top:27.77px;font-size:4.6px;color:#b8b8b8;">0.938</span>
<div style="left:984px;top:32.42999999999999px;width:29.5px;height:5.6px;background:#2b2b2b;"></div>
<span class="t" style="right:40.799999999999955px;top:34.20px;font-size:4.6px;color:#9c9c9c;letter-spacing:-0.08px">Translate Y</span>
<span class="t" style="left:987.5px;top:34.20px;font-size:4.6px;color:#b8b8b8;">0</span>
<div style="left:984px;top:38.86px;width:29.5px;height:5.6px;background:#2b2b2b;"></div>
<span class="t" style="right:40.799999999999955px;top:40.63px;font-size:4.6px;color:#9c9c9c;letter-spacing:-0.08px">Translate Z</span>
<span class="t" style="left:987.5px;top:40.63px;font-size:4.6px;color:#b8b8b8;">0</span>
<div style="left:984px;top:45.28999999999999px;width:29.5px;height:5.6px;background:#2b2b2b;"></div>
<span class="t" style="right:40.799999999999955px;top:47.06px;font-size:4.6px;color:#9c9c9c;letter-spacing:-0.08px">Rotate X</span>
<span class="t" style="left:987.5px;top:47.06px;font-size:4.6px;color:#b8b8b8;">0</span>
<div style="left:984px;top:51.72px;width:29.5px;height:5.6px;background:#2b2b2b;"></div>
<span class="t" style="right:40.799999999999955px;top:53.49px;font-size:4.6px;color:#9c9c9c;letter-spacing:-0.08px">Rotate Y</span>
<span class="t" style="left:987.5px;top:53.49px;font-size:4.6px;color:#b8b8b8;">0</span>
<div style="left:984px;top:58.14999999999999px;width:29.5px;height:5.6px;background:#2b2b2b;"></div>
<span class="t" style="right:40.799999999999955px;top:59.92px;font-size:4.6px;color:#9c9c9c;letter-spacing:-0.08px">Rotate Z</span>
<span class="t" style="left:987.5px;top:59.92px;font-size:4.6px;color:#b8b8b8;">0</span>
<div style="left:984px;top:64.58px;width:29.5px;height:5.6px;background:#2b2b2b;"></div>
<span class="t" style="right:40.799999999999955px;top:66.35px;font-size:4.6px;color:#9c9c9c;letter-spacing:-0.08px">Scale X</span>
<span class="t" style="left:987.5px;top:66.35px;font-size:4.6px;color:#b8b8b8;">1</span>
<div style="left:984px;top:71.00999999999999px;width:29.5px;height:5.6px;background:#2b2b2b;"></div>
<span class="t" style="right:40.799999999999955px;top:72.78px;font-size:4.6px;color:#9c9c9c;letter-spacing:-0.08px">Scale Y</span>
<span class="t" style="left:987.5px;top:72.78px;font-size:4.6px;color:#b8b8b8;">1</span>
<div style="left:984px;top:77.44px;width:29.5px;height:5.6px;background:#2b2b2b;"></div>
<span class="t" style="right:40.799999999999955px;top:79.21px;font-size:4.6px;color:#9c9c9c;letter-spacing:-0.08px">Scale Z</span>
<span class="t" style="left:987.5px;top:79.21px;font-size:4.6px;color:#b8b8b8;">1</span>
<div style="left:984px;top:83.86999999999999px;width:29.5px;height:5.6px;background:#2b2b2b;"></div>
<span class="t" style="right:40.799999999999955px;top:85.64px;font-size:4.6px;color:#9c9c9c;letter-spacing:-0.08px">Visibility</span>
<span class="t" style="left:987.5px;top:85.64px;font-size:4.6px;color:#b8b8b8;">on</span>
<div style="left:984px;top:90.3px;width:29.5px;height:5.6px;background:#2b2b2b;"></div>
<span class="t" style="right:40.799999999999955px;top:92.07px;font-size:4.6px;color:#9c9c9c;letter-spacing:-0.08px">Radius</span>
<span class="t" style="left:987.5px;top:92.07px;font-size:4.6px;color:#b8b8b8;">0.5</span>
<div style="left:984px;top:90.3px;width:1.5px;height:5.6px;background:#9a9a9a;"></div>
<div style="left:992.6px;top:68.8px;width:4.6px;height:6.2px;background:#f4f4f4;"></div>
<span class="t" style="left:993.6px;top:71.07px;font-size:4px;color:#555;">0</span>
<div style="left:915px;top:102.5px;width:99px;height:209px;background:#2b2b2b;"></div>
<div style="left:947px;top:314.3px;width:1.5px;height:0.6px;background:#5a5a5a;"></div>
<div style="left:950px;top:314.3px;width:1.5px;height:0.6px;background:#5a5a5a;"></div>
<div style="left:953px;top:314.3px;width:1.5px;height:0.6px;background:#5a5a5a;"></div>
<div style="left:956px;top:314.3px;width:1.5px;height:0.6px;background:#5a5a5a;"></div>
<div style="left:959px;top:314.3px;width:1.5px;height:0.6px;background:#5a5a5a;"></div>
<div style="left:962px;top:314.3px;width:1.5px;height:0.6px;background:#5a5a5a;"></div>
<div style="left:965px;top:314.3px;width:1.5px;height:0.6px;background:#5a5a5a;"></div>
<div style="left:968px;top:314.3px;width:1.5px;height:0.6px;background:#5a5a5a;"></div>
<div style="left:971px;top:314.3px;width:1.5px;height:0.6px;background:#5a5a5a;"></div>
<div style="left:974px;top:314.3px;width:1.5px;height:0.6px;background:#5a5a5a;"></div>
<div style="left:977px;top:314.3px;width:1.5px;height:0.6px;background:#5a5a5a;"></div>
<div style="left:980px;top:314.3px;width:1.5px;height:0.6px;background:#5a5a5a;"></div>
<div style="left:912px;top:318px;width:104px;height:128px;background:#404040;border:0.6px solid #393939"></div>
<div style="left:914px;top:319px;width:101px;height:6px;background:#3c3c3c;"></div>
<div style="left:914.5px;top:319px;width:24px;height:6px;background:#4c4c4c;"></div>
<span class="t" style="left:917.5px;top:321.27px;font-size:4.6px;color:#d0d0d0;">Display</span>
<div style="left:938.8px;top:319px;width:23.5px;height:6px;background:#404040;"></div>
<span class="t" style="left:943px;top:321.27px;font-size:4.6px;color:#8a8a8a;">Render</span>
<div style="left:962.5px;top:319px;width:14.5px;height:6px;background:#404040;"></div>
<span class="t" style="left:966.5px;top:321.27px;font-size:4.6px;color:#8a8a8a;">Anim</span>
<div style="left:914px;top:325px;width:101px;height:18px;background:#444;"></div>
<span class="t" style="left:917.7px;top:328.87px;font-size:4.6px;color:#b8b8b8;">Layers</span>
<span class="t" style="left:935.8px;top:328.87px;font-size:4.6px;color:#b8b8b8;">Options</span>
<span class="t" style="left:958.8px;top:328.87px;font-size:4.6px;color:#b8b8b8;">Help</span>
<svg style="left:977px;top:335px;" width="8" height="6" viewBox="0 0 8 6"><path d="M1 3 L4 1 V5 Z" fill="#ddd"/><rect x="4" y="1.8" width="1.3" height="2.4" fill="#ddd"/><rect x="5.5" y="1" width="1.5" height="4" fill="#3aa6cc"/></svg>
<svg style="left:986px;top:335px;" width="8" height="6" viewBox="0 0 8 6"><path d="M1 3 L4 1 V5 Z" fill="#ddd"/><rect x="4" y="1.8" width="1.3" height="2.4" fill="#ddd"/><rect x="5.5" y="1" width="1.5" height="4" fill="#3aa6cc"/></svg>
<svg style="left:996px;top:335px;" width="8" height="6" viewBox="0 0 8 6"><path d="M1 3 L4 1 V5 Z" fill="#ddd"/><rect x="4" y="1.8" width="1.3" height="2.4" fill="#ddd"/><rect x="5.5" y="1" width="1.5" height="4" fill="#3aa6cc"/></svg>
<svg style="left:1005px;top:335px;" width="8" height="6" viewBox="0 0 8 6"><path d="M1 3 L4 1 V5 Z" fill="#ddd"/><rect x="4" y="1.8" width="1.3" height="2.4" fill="#ddd"/><rect x="5.5" y="1" width="1.5" height="4" fill="#3aa6cc"/></svg>
<div style="left:915px;top:343.8px;width:99px;height:95.5px;background:#2b2b2b;"></div>
<div style="left:915px;top:439.2px;width:99px;height:4.5px;background:#333;"></div>
<svg style="left:916px;top:439.5px;" width="4" height="4" viewBox="0 0 4 4"><path d="M3.5 0.5 V3.5 L0.8 2Z" fill="#ccc"/></svg>
<div style="left:920px;top:439.6px;width:62px;height:3.6px;background:#5a5a5a;border-radius:1.8px"></div>
<svg style="left:1010px;top:439.5px;" width="4" height="4" viewBox="0 0 4 4"><path d="M0.5 0.5 V3.5 L3.2 2Z" fill="#ccc"/></svg>
<div style="left:1016.5px;top:0px;width:6.5px;height:446px;background:#444;"></div>
<div style="left:1016.5px;top:0px;width:0.8px;height:446px;background:#3a3a3a;"></div>
<div style="left:1017.3px;top:3px;width:5.7px;height:58px;background:#4a4a4a;"></div>
<div style="left:1017.3px;top:62.5px;width:5.7px;height:45px;background:#3c3c3c;"></div>
<div style="left:1017.3px;top:109px;width:5.7px;height:46px;background:#3c3c3c;"></div>
<span class="t" style="left:970.2px;top:28.7px;width:100px;text-align:center;font-size:4.6px;color:#d0d0d0;transform:rotate(90deg);transform-origin:50px 2.3px">Channel Box / Layer Editor</span>
<span class="t" style="left:970.2px;top:82.7px;width:100px;text-align:center;font-size:4.6px;color:#7a7a7a;transform:rotate(90deg);transform-origin:50px 2.3px">Attribute Editor</span>
<span class="t" style="left:970.2px;top:129.7px;width:100px;text-align:center;font-size:4.6px;color:#7a7a7a;transform:rotate(90deg);transform-origin:50px 2.3px">Modeling Toolkit</span>
<div style="left:0px;top:446px;width:1023px;height:36px;background:#444444;"></div>
<div style="left:6px;top:447.8px;width:901px;height:19.4px;background:#3a3a3a;"></div>
<div style="left:6px;top:448px;width:901px;height:3px;background:#424242;"></div>
<div style="left:6px;top:464.2px;width:901px;height:2.9px;background:#424242;"></div>
<div style="left:6px;top:451px;width:901px;height:13.2px;background:#2b2b2b;"></div>
<div style="left:9.0px;top:448px;width:0.7px;height:3px;background:#333;"></div>
<div style="left:9.0px;top:464.2px;width:0.7px;height:3px;background:#333;"></div>
<div style="left:8.950000000000001px;top:457.7px;width:0.7px;height:5.8px;background:#5e5e5e;"></div>
<span class="t" style="left:11.5px;top:453.27px;font-size:4.8px;color:#a8a8a8;">0</span>
<div style="left:23.8px;top:448px;width:0.7px;height:3px;background:#333;"></div>
<div style="left:23.8px;top:464.2px;width:0.7px;height:3px;background:#333;"></div>
<div style="left:23.75px;top:457.7px;width:0.7px;height:5.8px;background:#5e5e5e;"></div>
<span class="t" style="left:26.3px;top:453.27px;font-size:4.8px;color:#a8a8a8;">2</span>
<div style="left:38.60000000000001px;top:448px;width:0.7px;height:3px;background:#333;"></div>
<div style="left:38.60000000000001px;top:464.2px;width:0.7px;height:3px;background:#333;"></div>
<div style="left:38.550000000000004px;top:457.7px;width:0.7px;height:5.8px;background:#5e5e5e;"></div>
<span class="t" style="left:41.10000000000001px;top:453.27px;font-size:4.8px;color:#a8a8a8;">4</span>
<div style="left:53.400000000000006px;top:448px;width:0.7px;height:3px;background:#333;"></div>
<div style="left:53.400000000000006px;top:464.2px;width:0.7px;height:3px;background:#333;"></div>
<div style="left:53.35px;top:457.7px;width:0.7px;height:5.8px;background:#5e5e5e;"></div>
<span class="t" style="left:55.900000000000006px;top:453.27px;font-size:4.8px;color:#a8a8a8;">6</span>
<div style="left:68.2px;top:448px;width:0.7px;height:3px;background:#333;"></div>
<div style="left:68.2px;top:464.2px;width:0.7px;height:3px;background:#333;"></div>
<div style="left:68.15px;top:457.7px;width:0.7px;height:5.8px;background:#5e5e5e;"></div>
<span class="t" style="left:70.7px;top:453.27px;font-size:4.8px;color:#a8a8a8;">8</span>
<div style="left:83.0px;top:448px;width:0.7px;height:3px;background:#333;"></div>
<div style="left:83.0px;top:464.2px;width:0.7px;height:3px;background:#333;"></div>
<div style="left:82.95px;top:457.7px;width:0.7px;height:5.8px;background:#5e5e5e;"></div>
<span class="t" style="left:85.5px;top:453.27px;font-size:4.8px;color:#a8a8a8;">10</span>
<div style="left:97.80000000000001px;top:448px;width:0.7px;height:3px;background:#333;"></div>
<div style="left:97.80000000000001px;top:464.2px;width:0.7px;height:3px;background:#333;"></div>
<div style="left:97.75000000000001px;top:457.7px;width:0.7px;height:5.8px;background:#5e5e5e;"></div>
<span class="t" style="left:100.30000000000001px;top:453.27px;font-size:4.8px;color:#a8a8a8;">12</span>
<div style="left:112.60000000000001px;top:448px;width:0.7px;height:3px;background:#333;"></div>
<div style="left:112.60000000000001px;top:464.2px;width:0.7px;height:3px;background:#333;"></div>
<div style="left:112.55000000000001px;top:457.7px;width:0.7px;height:5.8px;background:#5e5e5e;"></div>
<span class="t" style="left:115.10000000000001px;top:453.27px;font-size:4.8px;color:#a8a8a8;">14</span>
<div style="left:127.4px;top:448px;width:0.7px;height:3px;background:#333;"></div>
<div style="left:127.4px;top:464.2px;width:0.7px;height:3px;background:#333;"></div>
<div style="left:127.35000000000001px;top:457.7px;width:0.7px;height:5.8px;background:#5e5e5e;"></div>
<span class="t" style="left:129.9px;top:453.27px;font-size:4.8px;color:#a8a8a8;">16</span>
<div style="left:142.20000000000002px;top:448px;width:0.7px;height:3px;background:#333;"></div>
<div style="left:142.20000000000002px;top:464.2px;width:0.7px;height:3px;background:#333;"></div>
<div style="left:142.15000000000003px;top:457.7px;width:0.7px;height:5.8px;background:#5e5e5e;"></div>
<span class="t" style="left:144.70000000000002px;top:453.27px;font-size:4.8px;color:#a8a8a8;">18</span>
<div style="left:157.0px;top:448px;width:0.7px;height:3px;background:#333;"></div>
<div style="left:157.0px;top:464.2px;width:0.7px;height:3px;background:#333;"></div>
<div style="left:156.95000000000002px;top:457.7px;width:0.7px;height:5.8px;background:#5e5e5e;"></div>
<span class="t" style="left:159.5px;top:453.27px;font-size:4.8px;color:#a8a8a8;">20</span>
<div style="left:171.8px;top:448px;width:0.7px;height:3px;background:#333;"></div>
<div style="left:171.8px;top:464.2px;width:0.7px;height:3px;background:#333;"></div>
<div style="left:171.75000000000003px;top:457.7px;width:0.7px;height:5.8px;background:#5e5e5e;"></div>
<span class="t" style="left:174.3px;top:453.27px;font-size:4.8px;color:#a8a8a8;">22</span>
<div style="left:186.60000000000002px;top:448px;width:0.7px;height:3px;background:#333;"></div>
<div style="left:186.60000000000002px;top:464.2px;width:0.7px;height:3px;background:#333;"></div>
<div style="left:186.55000000000004px;top:457.7px;width:0.7px;height:5.8px;background:#5e5e5e;"></div>
<span class="t" style="left:189.10000000000002px;top:453.27px;font-size:4.8px;color:#a8a8a8;">24</span>
<div style="left:201.4px;top:448px;width:0.7px;height:3px;background:#333;"></div>
<div style="left:201.4px;top:464.2px;width:0.7px;height:3px;background:#333;"></div>
<div style="left:201.35000000000002px;top:457.7px;width:0.7px;height:5.8px;background:#5e5e5e;"></div>
<span class="t" style="left:203.9px;top:453.27px;font-size:4.8px;color:#a8a8a8;">26</span>
<div style="left:216.20000000000002px;top:448px;width:0.7px;height:3px;background:#333;"></div>
<div style="left:216.20000000000002px;top:464.2px;width:0.7px;height:3px;background:#333;"></div>
<div style="left:216.15000000000003px;top:457.7px;width:0.7px;height:5.8px;background:#5e5e5e;"></div>
<span class="t" style="left:218.70000000000002px;top:453.27px;font-size:4.8px;color:#a8a8a8;">28</span>
<div style="left:231.0px;top:448px;width:0.7px;height:3px;background:#333;"></div>
<div style="left:231.0px;top:464.2px;width:0.7px;height:3px;background:#333;"></div>
<div style="left:230.95000000000002px;top:457.7px;width:0.7px;height:5.8px;background:#5e5e5e;"></div>
<span class="t" style="left:233.5px;top:453.27px;font-size:4.8px;color:#a8a8a8;">30</span>
<div style="left:245.8px;top:448px;width:0.7px;height:3px;background:#333;"></div>
<div style="left:245.8px;top:464.2px;width:0.7px;height:3px;background:#333;"></div>
<div style="left:245.75000000000003px;top:457.7px;width:0.7px;height:5.8px;background:#5e5e5e;"></div>
<span class="t" style="left:248.3px;top:453.27px;font-size:4.8px;color:#a8a8a8;">32</span>
<div style="left:260.6px;top:448px;width:0.7px;height:3px;background:#333;"></div>
<div style="left:260.6px;top:464.2px;width:0.7px;height:3px;background:#333;"></div>
<div style="left:260.55px;top:457.7px;width:0.7px;height:5.8px;background:#5e5e5e;"></div>
<span class="t" style="left:263.1px;top:453.27px;font-size:4.8px;color:#a8a8a8;">34</span>
<div style="left:275.40000000000003px;top:448px;width:0.7px;height:3px;background:#333;"></div>
<div style="left:275.40000000000003px;top:464.2px;width:0.7px;height:3px;background:#333;"></div>
<div style="left:275.35px;top:457.7px;width:0.7px;height:5.8px;background:#5e5e5e;"></div>
<span class="t" style="left:277.90000000000003px;top:453.27px;font-size:4.8px;color:#a8a8a8;">36</span>
<div style="left:290.2px;top:448px;width:0.7px;height:3px;background:#333;"></div>
<div style="left:290.2px;top:464.2px;width:0.7px;height:3px;background:#333;"></div>
<div style="left:290.15px;top:457.7px;width:0.7px;height:5.8px;background:#5e5e5e;"></div>
<span class="t" style="left:292.7px;top:453.27px;font-size:4.8px;color:#a8a8a8;">38</span>
<div style="left:305.0px;top:448px;width:0.7px;height:3px;background:#333;"></div>
<div style="left:305.0px;top:464.2px;width:0.7px;height:3px;background:#333;"></div>
<div style="left:304.95px;top:457.7px;width:0.7px;height:5.8px;background:#5e5e5e;"></div>
<span class="t" style="left:307.5px;top:453.27px;font-size:4.8px;color:#a8a8a8;">40</span>
<div style="left:319.8px;top:448px;width:0.7px;height:3px;background:#333;"></div>
<div style="left:319.8px;top:464.2px;width:0.7px;height:3px;background:#333;"></div>
<div style="left:319.75px;top:457.7px;width:0.7px;height:5.8px;background:#5e5e5e;"></div>
<span class="t" style="left:322.3px;top:453.27px;font-size:4.8px;color:#a8a8a8;">42</span>
<div style="left:334.6px;top:448px;width:0.7px;height:3px;background:#333;"></div>
<div style="left:334.6px;top:464.2px;width:0.7px;height:3px;background:#333;"></div>
<div style="left:334.55px;top:457.7px;width:0.7px;height:5.8px;background:#5e5e5e;"></div>
<span class="t" style="left:337.1px;top:453.27px;font-size:4.8px;color:#a8a8a8;">44</span>
<div style="left:349.40000000000003px;top:448px;width:0.7px;height:3px;background:#333;"></div>
<div style="left:349.40000000000003px;top:464.2px;width:0.7px;height:3px;background:#333;"></div>
<div style="left:349.35px;top:457.7px;width:0.7px;height:5.8px;background:#5e5e5e;"></div>
<span class="t" style="left:351.90000000000003px;top:453.27px;font-size:4.8px;color:#a8a8a8;">46</span>
<div style="left:364.20000000000005px;top:448px;width:0.7px;height:3px;background:#333;"></div>
<div style="left:364.20000000000005px;top:464.2px;width:0.7px;height:3px;background:#333;"></div>
<div style="left:364.15000000000003px;top:457.7px;width:0.7px;height:5.8px;background:#5e5e5e;"></div>
<span class="t" style="left:366.70000000000005px;top:453.27px;font-size:4.8px;color:#a8a8a8;">48</span>
<div style="left:379.0px;top:448px;width:0.7px;height:3px;background:#333;"></div>
<div style="left:379.0px;top:464.2px;width:0.7px;height:3px;background:#333;"></div>
<div style="left:378.95px;top:457.7px;width:0.7px;height:5.8px;background:#5e5e5e;"></div>
<span class="t" style="left:381.5px;top:453.27px;font-size:4.8px;color:#a8a8a8;">50</span>
<div style="left:393.8px;top:448px;width:0.7px;height:3px;background:#333;"></div>
<div style="left:393.8px;top:464.2px;width:0.7px;height:3px;background:#333;"></div>
<div style="left:393.75px;top:457.7px;width:0.7px;height:5.8px;background:#5e5e5e;"></div>
<span class="t" style="left:396.3px;top:453.27px;font-size:4.8px;color:#a8a8a8;">52</span>
<div style="left:408.6px;top:448px;width:0.7px;height:3px;background:#333;"></div>
<div style="left:408.6px;top:464.2px;width:0.7px;height:3px;background:#333;"></div>
<div style="left:408.55px;top:457.7px;width:0.7px;height:5.8px;background:#5e5e5e;"></div>
<span class="t" style="left:411.1px;top:453.27px;font-size:4.8px;color:#a8a8a8;">54</span>
<div style="left:423.40000000000003px;top:448px;width:0.7px;height:3px;background:#333;"></div>
<div style="left:423.40000000000003px;top:464.2px;width:0.7px;height:3px;background:#333;"></div>
<div style="left:423.35px;top:457.7px;width:0.7px;height:5.8px;background:#5e5e5e;"></div>
<span class="t" style="left:425.90000000000003px;top:453.27px;font-size:4.8px;color:#a8a8a8;">56</span>
<div style="left:438.20000000000005px;top:448px;width:0.7px;height:3px;background:#333;"></div>
<div style="left:438.20000000000005px;top:464.2px;width:0.7px;height:3px;background:#333;"></div>
<div style="left:438.15000000000003px;top:457.7px;width:0.7px;height:5.8px;background:#5e5e5e;"></div>
<span class="t" style="left:440.70000000000005px;top:453.27px;font-size:4.8px;color:#a8a8a8;">58</span>
<div style="left:453.0px;top:448px;width:0.7px;height:3px;background:#333;"></div>
<div style="left:453.0px;top:464.2px;width:0.7px;height:3px;background:#333;"></div>
<div style="left:452.95px;top:457.7px;width:0.7px;height:5.8px;background:#5e5e5e;"></div>
<span class="t" style="left:455.5px;top:453.27px;font-size:4.8px;color:#a8a8a8;">60</span>
<div style="left:467.8px;top:448px;width:0.7px;height:3px;background:#333;"></div>
<div style="left:467.8px;top:464.2px;width:0.7px;height:3px;background:#333;"></div>
<div style="left:467.75px;top:457.7px;width:0.7px;height:5.8px;background:#5e5e5e;"></div>
<span class="t" style="left:470.3px;top:453.27px;font-size:4.8px;color:#a8a8a8;">62</span>
<div style="left:482.6px;top:448px;width:0.7px;height:3px;background:#333;"></div>
<div style="left:482.6px;top:464.2px;width:0.7px;height:3px;background:#333;"></div>
<div style="left:482.55px;top:457.7px;width:0.7px;height:5.8px;background:#5e5e5e;"></div>
<span class="t" style="left:485.1px;top:453.27px;font-size:4.8px;color:#a8a8a8;">64</span>
<div style="left:497.40000000000003px;top:448px;width:0.7px;height:3px;background:#333;"></div>
<div style="left:497.40000000000003px;top:464.2px;width:0.7px;height:3px;background:#333;"></div>
<div style="left:497.35px;top:457.7px;width:0.7px;height:5.8px;background:#5e5e5e;"></div>
<span class="t" style="left:499.90000000000003px;top:453.27px;font-size:4.8px;color:#a8a8a8;">66</span>
<div style="left:512.2px;top:448px;width:0.7px;height:3px;background:#333;"></div>
<div style="left:512.2px;top:464.2px;width:0.7px;height:3px;background:#333;"></div>
<div style="left:512.15px;top:457.7px;width:0.7px;height:5.8px;background:#5e5e5e;"></div>
<span class="t" style="left:514.7px;top:453.27px;font-size:4.8px;color:#a8a8a8;">68</span>
<div style="left:527.0px;top:448px;width:0.7px;height:3px;background:#333;"></div>
<div style="left:527.0px;top:464.2px;width:0.7px;height:3px;background:#333;"></div>
<div style="left:526.9499999999999px;top:457.7px;width:0.7px;height:5.8px;background:#5e5e5e;"></div>
<span class="t" style="left:529.5px;top:453.27px;font-size:4.8px;color:#a8a8a8;">70</span>
<div style="left:541.8000000000001px;top:448px;width:0.7px;height:3px;background:#333;"></div>
<div style="left:541.8000000000001px;top:464.2px;width:0.7px;height:3px;background:#333;"></div>
<div style="left:541.75px;top:457.7px;width:0.7px;height:5.8px;background:#5e5e5e;"></div>
<span class="t" style="left:544.3000000000001px;top:453.27px;font-size:4.8px;color:#a8a8a8;">72</span>
<div style="left:556.6px;top:448px;width:0.7px;height:3px;background:#333;"></div>
<div style="left:556.6px;top:464.2px;width:0.7px;height:3px;background:#333;"></div>
<div style="left:556.55px;top:457.7px;width:0.7px;height:5.8px;background:#5e5e5e;"></div>
<span class="t" style="left:559.1px;top:453.27px;font-size:4.8px;color:#a8a8a8;">74</span>
<div style="left:571.4px;top:448px;width:0.7px;height:3px;background:#333;"></div>
<div style="left:571.4px;top:464.2px;width:0.7px;height:3px;background:#333;"></div>
<div style="left:571.3499999999999px;top:457.7px;width:0.7px;height:5.8px;background:#5e5e5e;"></div>
<span class="t" style="left:573.9px;top:453.27px;font-size:4.8px;color:#a8a8a8;">76</span>
<div style="left:586.2px;top:448px;width:0.7px;height:3px;background:#333;"></div>
<div style="left:586.2px;top:464.2px;width:0.7px;height:3px;background:#333;"></div>
<div style="left:586.15px;top:457.7px;width:0.7px;height:5.8px;background:#5e5e5e;"></div>
<span class="t" style="left:588.7px;top:453.27px;font-size:4.8px;color:#a8a8a8;">78</span>
<div style="left:601.0px;top:448px;width:0.7px;height:3px;background:#333;"></div>
<div style="left:601.0px;top:464.2px;width:0.7px;height:3px;background:#333;"></div>
<div style="left:600.9499999999999px;top:457.7px;width:0.7px;height:5.8px;background:#5e5e5e;"></div>
<span class="t" style="left:603.5px;top:453.27px;font-size:4.8px;color:#a8a8a8;">80</span>
<div style="left:615.8000000000001px;top:448px;width:0.7px;height:3px;background:#333;"></div>
<div style="left:615.8000000000001px;top:464.2px;width:0.7px;height:3px;background:#333;"></div>
<div style="left:615.75px;top:457.7px;width:0.7px;height:5.8px;background:#5e5e5e;"></div>
<span class="t" style="left:618.3000000000001px;top:453.27px;font-size:4.8px;color:#a8a8a8;">82</span>
<div style="left:630.6px;top:448px;width:0.7px;height:3px;background:#333;"></div>
<div style="left:630.6px;top:464.2px;width:0.7px;height:3px;background:#333;"></div>
<div style="left:630.55px;top:457.7px;width:0.7px;height:5.8px;background:#5e5e5e;"></div>
<span class="t" style="left:633.1px;top:453.27px;font-size:4.8px;color:#a8a8a8;">84</span>
<div style="left:645.4px;top:448px;width:0.7px;height:3px;background:#333;"></div>
<div style="left:645.4px;top:464.2px;width:0.7px;height:3px;background:#333;"></div>
<div style="left:645.3499999999999px;top:457.7px;width:0.7px;height:5.8px;background:#5e5e5e;"></div>
<span class="t" style="left:647.9px;top:453.27px;font-size:4.8px;color:#a8a8a8;">86</span>
<div style="left:660.2px;top:448px;width:0.7px;height:3px;background:#333;"></div>
<div style="left:660.2px;top:464.2px;width:0.7px;height:3px;background:#333;"></div>
<div style="left:660.15px;top:457.7px;width:0.7px;height:5.8px;background:#5e5e5e;"></div>
<span class="t" style="left:662.7px;top:453.27px;font-size:4.8px;color:#a8a8a8;">88</span>
<div style="left:675.0px;top:448px;width:0.7px;height:3px;background:#333;"></div>
<div style="left:675.0px;top:464.2px;width:0.7px;height:3px;background:#333;"></div>
<div style="left:674.9499999999999px;top:457.7px;width:0.7px;height:5.8px;background:#5e5e5e;"></div>
<span class="t" style="left:677.5px;top:453.27px;font-size:4.8px;color:#a8a8a8;">90</span>
<div style="left:689.8000000000001px;top:448px;width:0.7px;height:3px;background:#333;"></div>
<div style="left:689.8000000000001px;top:464.2px;width:0.7px;height:3px;background:#333;"></div>
<div style="left:689.75px;top:457.7px;width:0.7px;height:5.8px;background:#5e5e5e;"></div>
<span class="t" style="left:692.3000000000001px;top:453.27px;font-size:4.8px;color:#a8a8a8;">92</span>
<div style="left:704.6px;top:448px;width:0.7px;height:3px;background:#333;"></div>
<div style="left:704.6px;top:464.2px;width:0.7px;height:3px;background:#333;"></div>
<div style="left:704.55px;top:457.7px;width:0.7px;height:5.8px;background:#5e5e5e;"></div>
<span class="t" style="left:707.1px;top:453.27px;font-size:4.8px;color:#a8a8a8;">94</span>
<div style="left:719.4000000000001px;top:448px;width:0.7px;height:3px;background:#333;"></div>
<div style="left:719.4000000000001px;top:464.2px;width:0.7px;height:3px;background:#333;"></div>
<div style="left:719.35px;top:457.7px;width:0.7px;height:5.8px;background:#5e5e5e;"></div>
<span class="t" style="left:721.9000000000001px;top:453.27px;font-size:4.8px;color:#a8a8a8;">96</span>
<div style="left:734.2px;top:448px;width:0.7px;height:3px;background:#333;"></div>
<div style="left:734.2px;top:464.2px;width:0.7px;height:3px;background:#333;"></div>
<div style="left:734.15px;top:457.7px;width:0.7px;height:5.8px;background:#5e5e5e;"></div>
<span class="t" style="left:736.7px;top:453.27px;font-size:4.8px;color:#a8a8a8;">98</span>
<div style="left:749.0px;top:448px;width:0.7px;height:3px;background:#333;"></div>
<div style="left:749.0px;top:464.2px;width:0.7px;height:3px;background:#333;"></div>
<div style="left:748.9499999999999px;top:457.7px;width:0.7px;height:5.8px;background:#5e5e5e;"></div>
<span class="t" style="left:751.5px;top:453.27px;font-size:4.8px;color:#a8a8a8;">100</span>
<div style="left:763.8000000000001px;top:448px;width:0.7px;height:3px;background:#333;"></div>
<div style="left:763.8000000000001px;top:464.2px;width:0.7px;height:3px;background:#333;"></div>
<div style="left:763.75px;top:457.7px;width:0.7px;height:5.8px;background:#5e5e5e;"></div>
<span class="t" style="left:766.3000000000001px;top:453.27px;font-size:4.8px;color:#a8a8a8;">102</span>
<div style="left:778.6px;top:448px;width:0.7px;height:3px;background:#333;"></div>
<div style="left:778.6px;top:464.2px;width:0.7px;height:3px;background:#333;"></div>
<div style="left:778.55px;top:457.7px;width:0.7px;height:5.8px;background:#5e5e5e;"></div>
<span class="t" style="left:781.1px;top:453.27px;font-size:4.8px;color:#a8a8a8;">104</span>
<div style="left:793.4000000000001px;top:448px;width:0.7px;height:3px;background:#333;"></div>
<div style="left:793.4000000000001px;top:464.2px;width:0.7px;height:3px;background:#333;"></div>
<div style="left:793.35px;top:457.7px;width:0.7px;height:5.8px;background:#5e5e5e;"></div>
<span class="t" style="left:795.9000000000001px;top:453.27px;font-size:4.8px;color:#a8a8a8;">106</span>
<div style="left:808.2px;top:448px;width:0.7px;height:3px;background:#333;"></div>
<div style="left:808.2px;top:464.2px;width:0.7px;height:3px;background:#333;"></div>
<div style="left:808.15px;top:457.7px;width:0.7px;height:5.8px;background:#5e5e5e;"></div>
<span class="t" style="left:810.7px;top:453.27px;font-size:4.8px;color:#a8a8a8;">108</span>
<div style="left:823.0px;top:448px;width:0.7px;height:3px;background:#333;"></div>
<div style="left:823.0px;top:464.2px;width:0.7px;height:3px;background:#333;"></div>
<div style="left:822.9499999999999px;top:457.7px;width:0.7px;height:5.8px;background:#5e5e5e;"></div>
<span class="t" style="left:825.5px;top:453.27px;font-size:4.8px;color:#a8a8a8;">110</span>
<div style="left:837.8000000000001px;top:448px;width:0.7px;height:3px;background:#333;"></div>
<div style="left:837.8000000000001px;top:464.2px;width:0.7px;height:3px;background:#333;"></div>
<div style="left:837.75px;top:457.7px;width:0.7px;height:5.8px;background:#5e5e5e;"></div>
<span class="t" style="left:840.3000000000001px;top:453.27px;font-size:4.8px;color:#a8a8a8;">112</span>
<div style="left:852.6px;top:448px;width:0.7px;height:3px;background:#333;"></div>
<div style="left:852.6px;top:464.2px;width:0.7px;height:3px;background:#333;"></div>
<div style="left:852.55px;top:457.7px;width:0.7px;height:5.8px;background:#5e5e5e;"></div>
<span class="t" style="left:855.1px;top:453.27px;font-size:4.8px;color:#a8a8a8;">114</span>
<div style="left:867.4000000000001px;top:448px;width:0.7px;height:3px;background:#333;"></div>
<div style="left:867.4000000000001px;top:464.2px;width:0.7px;height:3px;background:#333;"></div>
<div style="left:867.35px;top:457.7px;width:0.7px;height:5.8px;background:#5e5e5e;"></div>
<span class="t" style="left:869.9000000000001px;top:453.27px;font-size:4.8px;color:#a8a8a8;">116</span>
<div style="left:882.2px;top:448px;width:0.7px;height:3px;background:#333;"></div>
<div style="left:882.2px;top:464.2px;width:0.7px;height:3px;background:#333;"></div>
<div style="left:882.15px;top:457.7px;width:0.7px;height:5.8px;background:#5e5e5e;"></div>
<span class="t" style="left:884.7px;top:453.27px;font-size:4.8px;color:#a8a8a8;">118</span>
<div style="left:897.0px;top:448px;width:0.7px;height:3px;background:#333;"></div>
<div style="left:897.0px;top:464.2px;width:0.7px;height:3px;background:#333;"></div>
<span class="t" style="left:899.5px;top:453.27px;font-size:4.8px;color:#a8a8a8;">120</span>
<div style="left:415.7px;top:448px;width:7.4px;height:3px;background:#5e5e5e;"></div>
<div style="left:415.7px;top:464.2px;width:7.4px;height:3px;background:#5e5e5e;"></div>
<div style="left:415.7px;top:451px;width:7.4px;height:13.2px;background:#3d3d3d;"></div>
<span class="t" style="left:419.1px;top:459.67px;font-size:4.3px;color:#f0f0f0;font-weight:bold">55</span>
<div style="left:8.850000000000001px;top:451px;width:0.9px;height:13.2px;background:#962626;"></div>
<div style="left:82.85px;top:451px;width:0.9px;height:13.2px;background:#962626;"></div>
<div style="left:230.85000000000002px;top:451px;width:0.9px;height:13.2px;background:#962626;"></div>
<div style="left:304.85px;top:451px;width:0.9px;height:13.2px;background:#962626;"></div>
<div style="left:378.85px;top:451px;width:0.9px;height:13.2px;background:#962626;"></div>
<div style="left:452.85px;top:451px;width:0.9px;height:13.2px;background:#962626;"></div>
<div style="left:600.8499999999999px;top:451px;width:0.9px;height:13.2px;background:#962626;"></div>
<div style="left:748.8499999999999px;top:451px;width:0.9px;height:13.2px;background:#962626;"></div>
<div style="left:822.8499999999999px;top:451px;width:0.9px;height:13.2px;background:#962626;"></div>
<div style="left:896.8499999999999px;top:451px;width:0.9px;height:13.2px;background:#962626;"></div>
<div style="left:911px;top:453.8px;width:19.5px;height:7.4px;background:#2b2b2b;"></div>
<span class="t" style="left:913px;top:457.37px;font-size:4.5px;color:#c8c8c8;">55</span>
<svg style="left:937px;top:454px;" width="10" height="7" viewBox="0 0 10 7"><path d="M1 1V6" stroke="#ccc" stroke-width="0.8"/><path d="M6 1 L2 3.5 L6 6Z M9 1 L5 3.5 L9 6Z" fill="#ccc"/></svg>
<svg style="left:947px;top:454px;" width="10" height="7" viewBox="0 0 10 7"><path d="M1.5 1V6" stroke="#ccc" stroke-width="0.8"/><path d="M6.5 1 L2.5 3.5 L6.5 6Z" fill="#ccc"/></svg>
<svg style="left:957px;top:454px;" width="10" height="7" viewBox="0 0 10 7"><path d="M1.5 1V6" stroke="#e07a30" stroke-width="0.9"/><path d="M6.5 1 L2.5 3.5 L6.5 6Z" fill="#ccc"/></svg>
<svg style="left:968px;top:454px;" width="10" height="7" viewBox="0 0 10 7"><path d="M6.5 0.5 L1.5 3.5 L6.5 6.5Z" fill="#ccc"/></svg>
<svg style="left:978px;top:454px;" width="10" height="7" viewBox="0 0 10 7"><path d="M1.5 0.5 L6.5 3.5 L1.5 6.5Z" fill="#ccc"/></svg>
<svg style="left:988px;top:454px;" width="10" height="7" viewBox="0 0 10 7"><path d="M6.5 1V6" stroke="#e07a30" stroke-width="0.9"/><path d="M1.5 1 L5.5 3.5 L1.5 6Z" fill="#ccc"/></svg>
<svg style="left:998px;top:454px;" width="10" height="7" viewBox="0 0 10 7"><path d="M6.5 1V6" stroke="#ccc" stroke-width="0.8"/><path d="M1.5 1 L5.5 3.5 L1.5 6Z" fill="#ccc"/></svg>
<svg style="left:1008px;top:454px;" width="10" height="7" viewBox="0 0 10 7"><path d="M9 1V6" stroke="#ccc" stroke-width="0.8"/><path d="M1 1 L5 3.5 L1 6Z M4 1 L8 3.5 L4 6Z" fill="#ccc"/></svg>
<div style="left:0px;top:467.4px;width:1023px;height:0.8px;background:#3a3a3a;"></div>
<div style="left:6.4px;top:471.4px;width:19.5px;height:7.3px;background:#2b2b2b;"></div>
<span class="t" style="left:8.5px;top:474.07px;font-size:4.5px;color:#c8c8c8;">0</span>
<div style="left:29.8px;top:471px;width:692px;height:8.2px;background:#474747;border-top:0.9px solid #333;border-bottom:0.9px solid #363636"></div>
<div style="left:375.6px;top:473.2px;width:1px;height:0.8px;background:#666;"></div>
<div style="left:375.6px;top:474.6px;width:1px;height:0.8px;background:#666;"></div>
<div style="left:375.6px;top:476px;width:1px;height:0.8px;background:#666;"></div>
<div style="left:375.6px;top:477.4px;width:1px;height:0.8px;background:#666;"></div>
<div style="left:30.8px;top:471.5px;width:3.2px;height:7px;background:#bdbdbd;"></div>
<span class="t" style="left:37px;top:474.07px;font-size:4.5px;color:#c8c8c8;">0</span>
<span class="t" style="right:308px;top:474.07px;font-size:4.5px;color:#c8c8c8;">120</span>
<div style="left:718px;top:471.5px;width:3.2px;height:7px;background:#bdbdbd;"></div>
<div style="left:726px;top:471px;width:19px;height:8px;background:#2b2b2b;"></div>
<span class="t" style="left:728px;top:474.07px;font-size:4.5px;color:#c8c8c8;">120</span>
<div style="left:754px;top:472px;width:0.8px;height:6px;background:#777;"></div>
<svg style="left:764px;top:470.5px;" width="8" height="9" viewBox="0 0 8 9"><path d="M1.5 2 H4.5 V8 L3 6.5 L1.5 8Z" fill="#e06a30"/><path d="M5.5 1 V4.5 M3.8 2.7 H7.2" stroke="#ddd" stroke-width="0.7"/></svg>
<div style="left:779.5px;top:472px;width:0.8px;height:6px;background:#777;"></div>
<svg style="left:789px;top:472.5px;" width="5" height="4" viewBox="0 0 5 4"><path d="M0.5 0.8 H4.5 L2.5 3Z" fill="#888"/></svg>
<div style="left:797px;top:471px;width:39px;height:8px;background:#3c3c3c;"></div>
<span class="t" style="left:799px;top:474.07px;font-size:4.5px;color:#bbb;">No Character Set</span>
<svg style="left:842.5px;top:472.5px;" width="5" height="4" viewBox="0 0 5 4"><path d="M0.5 0.8 H4.5 L2.5 3Z" fill="#888"/></svg>
<div style="left:849px;top:471px;width:40px;height:8px;background:#3c3c3c;"></div>
<span class="t" style="left:851px;top:474.07px;font-size:4.5px;color:#bbb;">No Anim Layer</span>
<div style="left:899px;top:472px;width:0.8px;height:6px;background:#777;"></div>
<div style="left:908px;top:471px;width:30px;height:7.6px;background:#555;"></div>
<span class="t" style="left:909.5px;top:474.07px;font-size:4.5px;color:#bbb;">24 fps</span>
<div style="left:938px;top:471px;width:8px;height:7.6px;background:#5a5a5a;"></div>
<svg style="left:938px;top:471px;" width="8" height="7.6" viewBox="0 0 8 7.6"><path d="M2 2.8 H6 L4 5Z" fill="#ddd"/></svg>
<svg style="left:951px;top:470.5px;" width="10" height="8" viewBox="0 0 10 8"><path d="M2 3 Q2 1.5 4 1.5 H7 M8 5 Q8 6.5 6 6.5 H3" stroke="#ddd" stroke-width="0.8" fill="none"/><path d="M7 0.3 L8.5 1.5 L7 2.7Z M3 5.3 L1.5 6.5 L3 7.7Z" fill="#ddd"/></svg>
<svg style="left:963px;top:469.8px;" width="10" height="9" viewBox="0 0 10 9"><rect x="1" y="3" width="6" height="5" fill="#e06a30"/><path d="M2 5.5 H6" stroke="#444" stroke-width="0.5"/><path d="M7.5 1 V4 M6 2.5 H9" stroke="#ddd" stroke-width="0.7"/></svg>
<div style="left:980px;top:472px;width:0.8px;height:6px;background:#777;"></div>
<svg style="left:990px;top:471px;" width="9" height="7" viewBox="0 0 9 7"><path d="M1 2.5 H3 L6 0.5 V6.5 L3 4.5 H1Z" fill="#ccc"/><path d="M7.5 1.5 V5.5" stroke="#ccc" stroke-width="0.6"/></svg>
<svg style="left:1000px;top:470.5px;" width="10" height="8" viewBox="0 0 10 8"><rect x="1.5" y="1.5" width="7" height="5" fill="none" stroke="#ccc" stroke-width="0.7"/><path d="M5 2.5 V5 M3.8 3.8 L5 5 L6.2 3.8" stroke="#e07a30" stroke-width="0.7" fill="none"/></svg>
<svg style="left:1011px;top:469.5px;" width="10" height="9" viewBox="0 0 10 9"><path d="M2 2 L8 8 M8 2 L2 8" stroke="#e06a30" stroke-width="1.3"/><circle cx="3" cy="2.5" r="1.4" fill="none" stroke="#ddd" stroke-width="0.6"/></svg>
</body></html>
